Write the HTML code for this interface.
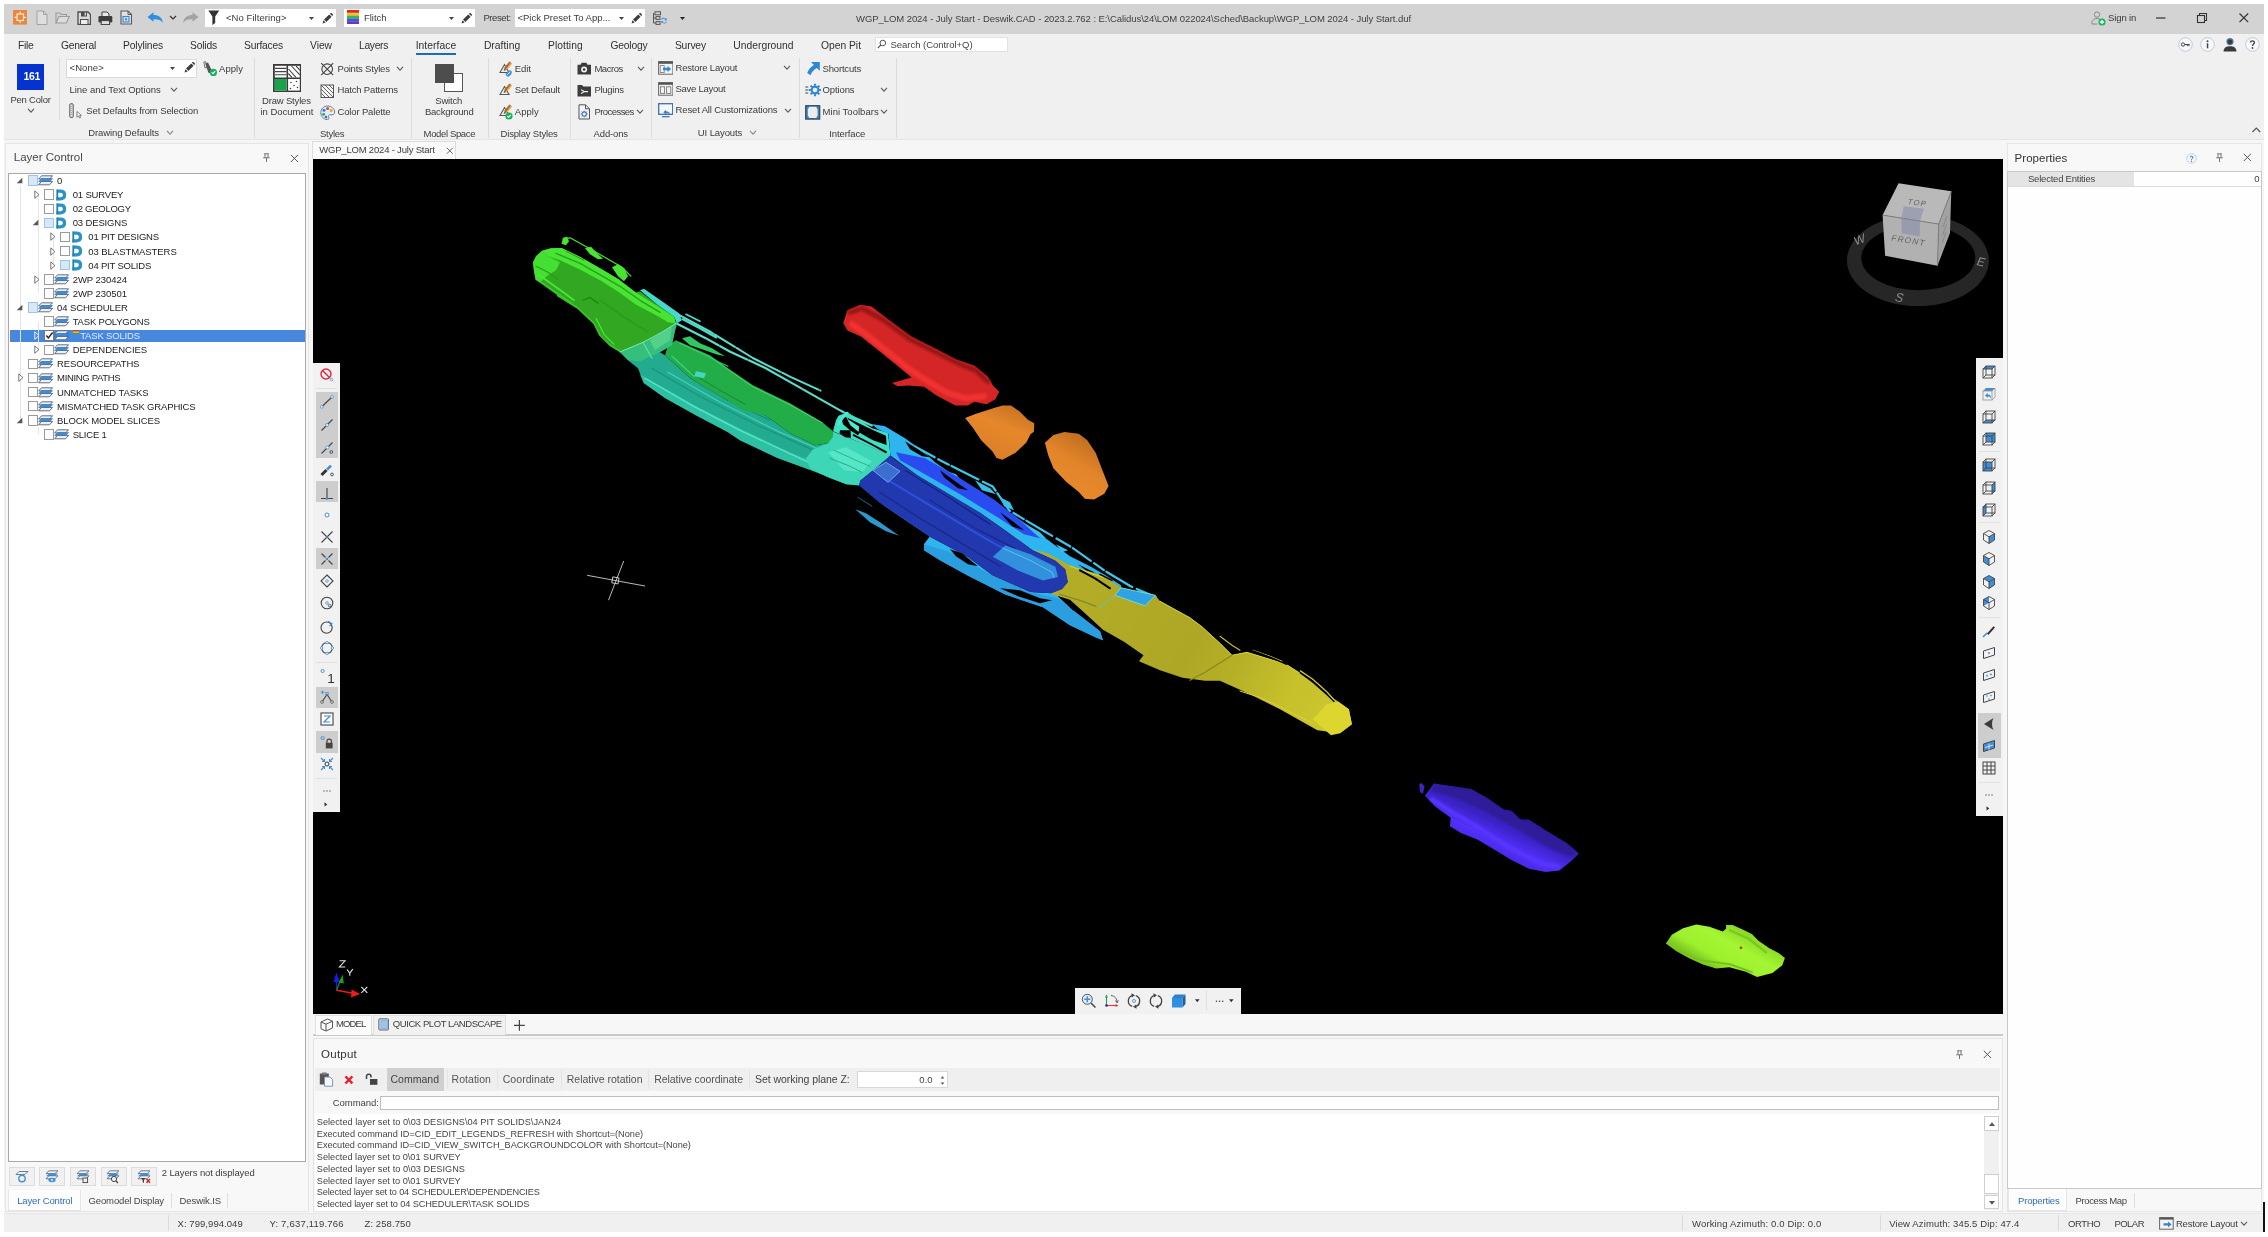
<!DOCTYPE html>
<html><head><meta charset="utf-8"><title>Deswik.CAD</title>
<style>
html,body{margin:0;padding:0;}
body{width:2268px;height:1237px;background:#fff;position:relative;overflow:hidden;font-family:"Liberation Sans",sans-serif;}
div,svg,span{position:absolute;}
.t{white-space:pre;}
#w{left:0;top:0;width:2268px;height:1237px;will-change:transform;}
</style></head><body><div id="w">
<div style="left:4px;top:4px;width:2260px;height:1228px;background:#f0f0f0;"></div>
<div style="left:4px;top:4px;width:2260px;height:30px;background:#d3d3d3;"></div>
<div style="left:4px;top:34px;width:2260px;height:105px;background:#f0f0f0;"></div>
<div style="left:4px;top:139px;width:2260px;height:1075px;background:#f6f6f6;"></div>
<div style="left:4px;top:139px;width:2260px;height:1px;background:#e4e4e4;"></div>
<div style="left:4px;top:1213px;width:2260px;height:19px;background:#f0f0f0;"></div>
<div style="left:4px;top:1213px;width:2260px;height:1px;background:#e6e6e6;"></div>
<div style="left:2263px;top:1202px;width:2px;height:30px;background:#111;"></div>
<div style="left:205px;top:9px;width:131px;height:18px;background:#fff;"></div>
<span class="t" style="left:226px;top:10.95px;font-size:9.5px;line-height:13.5px;color:#3b3b3b;letter-spacing:0.060px;">&lt;No Filtering&gt;</span>
<svg style="left:308.5px;top:17.0px;" width="5" height="3" viewBox="0 0 5 3"><path d="M0 0 H5 L2.5 3 Z" fill="#444"/></svg>
<svg style="left:321.5px;top:12.5px;" width="11" height="11" viewBox="0 0 11 11"><g fill="#3d3d3d"><path d="M0.6 10.4 L1.4 7.3 L3.7 9.6 Z"/><path d="M2 6.6 L7.2 1.4 L9.6 3.8 L4.4 9 Z"/><path d="M7.9 0.8 L8.6 0.1 Q9.2 -0.3 9.8 0.3 L10.7 1.2 Q11.2 1.8 10.8 2.4 L10.2 3.1 Z"/></g></svg>
<div style="left:343.5px;top:9px;width:131.5px;height:18px;background:#fff;"></div>
<span class="t" style="left:364px;top:10.95px;font-size:9.5px;line-height:13.5px;color:#3b3b3b;letter-spacing:-0.033px;">Flitch</span>
<svg style="left:448.5px;top:17.0px;" width="5" height="3" viewBox="0 0 5 3"><path d="M0 0 H5 L2.5 3 Z" fill="#444"/></svg>
<svg style="left:460.5px;top:12.5px;" width="11" height="11" viewBox="0 0 11 11"><g fill="#3d3d3d"><path d="M0.6 10.4 L1.4 7.3 L3.7 9.6 Z"/><path d="M2 6.6 L7.2 1.4 L9.6 3.8 L4.4 9 Z"/><path d="M7.9 0.8 L8.6 0.1 Q9.2 -0.3 9.8 0.3 L10.7 1.2 Q11.2 1.8 10.8 2.4 L10.2 3.1 Z"/></g></svg>
<span class="t" style="left:483.4px;top:10.95px;font-size:9.5px;line-height:13.5px;color:#3b3b3b;letter-spacing:-0.399px;">Preset:</span>
<div style="left:515px;top:9px;width:130px;height:18px;background:#fff;"></div>
<span class="t" style="left:517.4px;top:10.95px;font-size:9.5px;line-height:13.5px;color:#3b3b3b;letter-spacing:-0.001px;">&lt;Pick Preset To App...</span>
<svg style="left:618.5px;top:17.0px;" width="5" height="3" viewBox="0 0 5 3"><path d="M0 0 H5 L2.5 3 Z" fill="#444"/></svg>
<svg style="left:630.5px;top:12.5px;" width="11" height="11" viewBox="0 0 11 11"><g fill="#3d3d3d"><path d="M0.6 10.4 L1.4 7.3 L3.7 9.6 Z"/><path d="M2 6.6 L7.2 1.4 L9.6 3.8 L4.4 9 Z"/><path d="M7.9 0.8 L8.6 0.1 Q9.2 -0.3 9.8 0.3 L10.7 1.2 Q11.2 1.8 10.8 2.4 L10.2 3.1 Z"/></g></svg>
<svg style="left:680.0px;top:17.0px;" width="5" height="3" viewBox="0 0 5 3"><path d="M0 0 H5 L2.5 3 Z" fill="#222"/></svg>
<span class="t" style="left:856px;top:11.65px;font-size:9.5px;line-height:13.5px;color:#3f3f3f;letter-spacing:-0.065px;">WGP_LOM 2024 - July Start - Deswik.CAD - 2023.2.762 : E:\Calidus\24\LOM 022024\Sched\Backup\WGP_LOM 2024 - July Start.duf</span>
<span class="t" style="left:2108px;top:10.95px;font-size:9.5px;line-height:13.5px;color:#3b3b3b;letter-spacing:-0.107px;">Sign in</span>
<svg style="left:2155px;top:12px;" width="12" height="12" viewBox="0 0 12 12"><path d="M1 6 H10.5" stroke="#333" stroke-width="1.2"/></svg>
<svg style="left:2196px;top:12px;" width="12" height="12" viewBox="0 0 12 12"><path d="M3.5 3.5 V1.5 H10.5 V8.5 H8.5" fill="none" stroke="#333" stroke-width="1.1"/><rect x="1.5" y="3.5" width="7" height="7" fill="none" stroke="#333" stroke-width="1.1"/></svg>
<svg style="left:2238px;top:12px;" width="12" height="12" viewBox="0 0 12 12"><path d="M1.5 1.5 L10.2 10.2 M10.2 1.5 L1.5 10.2" stroke="#333" stroke-width="1.2"/></svg>
<span class="t" style="left:18px;top:38.65px;font-size:10.3px;line-height:14.3px;color:#303030;letter-spacing:-0.274px;">File</span>
<span class="t" style="left:61px;top:38.65px;font-size:10.3px;line-height:14.3px;color:#303030;letter-spacing:-0.234px;">General</span>
<span class="t" style="left:123px;top:38.65px;font-size:10.3px;line-height:14.3px;color:#303030;letter-spacing:-0.135px;">Polylines</span>
<span class="t" style="left:190px;top:38.65px;font-size:10.3px;line-height:14.3px;color:#303030;letter-spacing:-0.176px;">Solids</span>
<span class="t" style="left:244px;top:38.65px;font-size:10.3px;line-height:14.3px;color:#303030;letter-spacing:-0.206px;">Surfaces</span>
<span class="t" style="left:310px;top:38.65px;font-size:10.3px;line-height:14.3px;color:#303030;letter-spacing:-0.035px;">View</span>
<span class="t" style="left:359px;top:38.65px;font-size:10.3px;line-height:14.3px;color:#303030;letter-spacing:-0.319px;">Layers</span>
<span class="t" style="left:415.7px;top:38.65px;font-size:10.3px;line-height:14.3px;color:#303030;letter-spacing:0.047px;">Interface</span>
<span class="t" style="left:483.9px;top:38.65px;font-size:10.3px;line-height:14.3px;color:#303030;letter-spacing:0.030px;">Drafting</span>
<span class="t" style="left:548px;top:38.65px;font-size:10.3px;line-height:14.3px;color:#303030;letter-spacing:0.043px;">Plotting</span>
<span class="t" style="left:610.4px;top:38.65px;font-size:10.3px;line-height:14.3px;color:#303030;letter-spacing:-0.166px;">Geology</span>
<span class="t" style="left:674.9px;top:38.65px;font-size:10.3px;line-height:14.3px;color:#303030;letter-spacing:-0.176px;">Survey</span>
<span class="t" style="left:733.3px;top:38.65px;font-size:10.3px;line-height:14.3px;color:#303030;letter-spacing:0.016px;">Underground</span>
<span class="t" style="left:821px;top:38.65px;font-size:10.3px;line-height:14.3px;color:#303030;letter-spacing:-0.010px;">Open Pit</span>
<div style="left:415.7px;top:53px;width:40.5px;height:2px;background:#1b6cb8;"></div>
<div style="left:874.5px;top:36.5px;width:133px;height:15px;background:#fff;border:1px solid #e2e2e2;box-sizing:border-box;"></div>
<svg style="left:877px;top:39px;" width="10" height="10" viewBox="0 0 10 10"><circle cx="5.8" cy="4" r="2.8" fill="none" stroke="#555" stroke-width="1"/><path d="M3.8 6 L0.8 9.2" stroke="#555" stroke-width="1.1"/></svg>
<span class="t" style="left:890.5px;top:38.05px;font-size:9.5px;line-height:13.5px;color:#444;letter-spacing:-0.029px;">Search (Control+Q)</span>
<div style="left:58.6px;top:58px;width:1px;height:62px;background:#dcdcdc;"></div>
<div style="left:253.8px;top:58px;width:1px;height:80px;background:#dcdcdc;"></div>
<div style="left:411px;top:58px;width:1px;height:80px;background:#dcdcdc;"></div>
<div style="left:487.5px;top:58px;width:1px;height:80px;background:#dcdcdc;"></div>
<div style="left:570px;top:58px;width:1px;height:80px;background:#dcdcdc;"></div>
<div style="left:651.4px;top:58px;width:1px;height:80px;background:#dcdcdc;"></div>
<div style="left:799px;top:58px;width:1px;height:80px;background:#dcdcdc;"></div>
<div style="left:896.3px;top:58px;width:1px;height:80px;background:#dcdcdc;"></div>
<div style="left:16.8px;top:63.7px;width:27.2px;height:26.8px;background:#0433cf;"></div>
<span class="t" style="left:23.4px;top:68.85px;font-size:10.5px;line-height:14.5px;color:#fff;letter-spacing:-0.239px;font-weight:bold;">161</span>
<span class="t" style="left:10.4px;top:92.85px;font-size:9.5px;line-height:13.5px;color:#3b3b3b;letter-spacing:-0.205px;">Pen Color</span>
<svg style="left:26.5px;top:107.7px;" width="8" height="5.2" viewBox="0 0 8 5.2"><path d="M1 1 L4.0 4.2 L7 1" fill="none" stroke="#5a5a5a" stroke-width="1.1"/></svg>
<div style="left:65.8px;top:58.6px;width:131.6px;height:19.3px;background:#fff;border:1px solid #dadada;box-sizing:border-box;"></div>
<span class="t" style="left:69.5px;top:60.55px;font-size:9.5px;line-height:13.5px;color:#3b3b3b;letter-spacing:0.099px;">&lt;None&gt;</span>
<svg style="left:170.3px;top:66.8px;" width="5" height="3" viewBox="0 0 5 3"><path d="M0 0 H5 L2.5 3 Z" fill="#444"/></svg>
<svg style="left:183.5px;top:62.3px;" width="11" height="11" viewBox="0 0 11 11"><g fill="#3d3d3d"><path d="M0.6 10.4 L1.4 7.3 L3.7 9.6 Z"/><path d="M2 6.6 L7.2 1.4 L9.6 3.8 L4.4 9 Z"/><path d="M7.9 0.8 L8.6 0.1 Q9.2 -0.3 9.8 0.3 L10.7 1.2 Q11.2 1.8 10.8 2.4 L10.2 3.1 Z"/></g></svg>
<span class="t" style="left:219px;top:61.85px;font-size:9.5px;line-height:13.5px;color:#3b3b3b;letter-spacing:0.047px;">Apply</span>
<span class="t" style="left:69.5px;top:82.95px;font-size:9.5px;line-height:13.5px;color:#3b3b3b;letter-spacing:-0.020px;">Line and Text Options</span>
<svg style="left:170.2px;top:86.60000000000001px;" width="8" height="5.2" viewBox="0 0 8 5.2"><path d="M1 1 L4.0 4.2 L7 1" fill="none" stroke="#5a5a5a" stroke-width="1.1"/></svg>
<span class="t" style="left:86.3px;top:103.95px;font-size:9.5px;line-height:13.5px;color:#3b3b3b;letter-spacing:-0.119px;">Set Defaults from Selection</span>
<span class="t" style="left:88.3px;top:125.65px;font-size:9.5px;line-height:13.5px;color:#3b3b3b;letter-spacing:-0.115px;">Drawing Defaults</span>
<svg style="left:165.6px;top:129.70000000000002px;" width="8" height="5.2" viewBox="0 0 8 5.2"><path d="M1 1 L4.0 4.2 L7 1" fill="none" stroke="#888" stroke-width="1.1"/></svg>
<span class="t" style="left:262px;top:93.65px;font-size:9.5px;line-height:13.5px;color:#3b3b3b;letter-spacing:-0.171px;">Draw Styles</span>
<span class="t" style="left:260.5px;top:104.55px;font-size:9.5px;line-height:13.5px;color:#3b3b3b;letter-spacing:-0.048px;">in Document</span>
<span class="t" style="left:337.5px;top:61.55px;font-size:9.5px;line-height:13.5px;color:#3b3b3b;letter-spacing:-0.209px;">Points Styles</span>
<svg style="left:396.4px;top:65.80000000000001px;" width="8" height="5.2" viewBox="0 0 8 5.2"><path d="M1 1 L4.0 4.2 L7 1" fill="none" stroke="#5a5a5a" stroke-width="1.1"/></svg>
<span class="t" style="left:337.5px;top:83.25px;font-size:9.5px;line-height:13.5px;color:#3b3b3b;letter-spacing:-0.181px;">Hatch Patterns</span>
<span class="t" style="left:337.5px;top:104.95px;font-size:9.5px;line-height:13.5px;color:#3b3b3b;letter-spacing:-0.155px;">Color Palette</span>
<span class="t" style="left:320px;top:126.65px;font-size:9.5px;line-height:13.5px;color:#3b3b3b;letter-spacing:-0.278px;">Styles</span>
<span class="t" style="left:435.3px;top:93.65px;font-size:9.5px;line-height:13.5px;color:#3b3b3b;letter-spacing:-0.197px;">Switch</span>
<span class="t" style="left:424.9px;top:104.55px;font-size:9.5px;line-height:13.5px;color:#3b3b3b;letter-spacing:-0.210px;">Background</span>
<span class="t" style="left:423.6px;top:126.65px;font-size:9.5px;line-height:13.5px;color:#3b3b3b;letter-spacing:-0.359px;">Model Space</span>
<span class="t" style="left:514.8px;top:61.55px;font-size:9.5px;line-height:13.5px;color:#3b3b3b;letter-spacing:-0.092px;">Edit</span>
<span class="t" style="left:514.8px;top:83.25px;font-size:9.5px;line-height:13.5px;color:#3b3b3b;letter-spacing:-0.163px;">Set Default</span>
<span class="t" style="left:514.8px;top:104.95px;font-size:9.5px;line-height:13.5px;color:#3b3b3b;letter-spacing:0.047px;">Apply</span>
<span class="t" style="left:500.6px;top:126.65px;font-size:9.5px;line-height:13.5px;color:#3b3b3b;letter-spacing:-0.190px;">Display Styles</span>
<span class="t" style="left:594.4px;top:61.55px;font-size:9.5px;line-height:13.5px;color:#3b3b3b;letter-spacing:-0.440px;">Macros</span>
<svg style="left:636.9px;top:65.80000000000001px;" width="8" height="5.2" viewBox="0 0 8 5.2"><path d="M1 1 L4.0 4.2 L7 1" fill="none" stroke="#5a5a5a" stroke-width="1.1"/></svg>
<span class="t" style="left:594.4px;top:83.25px;font-size:9.5px;line-height:13.5px;color:#3b3b3b;letter-spacing:-0.265px;">Plugins</span>
<span class="t" style="left:594.4px;top:104.95px;font-size:9.5px;line-height:13.5px;color:#3b3b3b;letter-spacing:-0.550px;">Processes</span>
<svg style="left:636.0px;top:109.2px;" width="8" height="5.2" viewBox="0 0 8 5.2"><path d="M1 1 L4.0 4.2 L7 1" fill="none" stroke="#5a5a5a" stroke-width="1.1"/></svg>
<span class="t" style="left:593.6px;top:126.65px;font-size:9.5px;line-height:13.5px;color:#3b3b3b;letter-spacing:-0.155px;">Add-ons</span>
<span class="t" style="left:675.5px;top:61.05px;font-size:9.5px;line-height:13.5px;color:#3b3b3b;letter-spacing:-0.194px;">Restore Layout</span>
<svg style="left:783.0px;top:65.2px;" width="8" height="5.2" viewBox="0 0 8 5.2"><path d="M1 1 L4.0 4.2 L7 1" fill="none" stroke="#5a5a5a" stroke-width="1.1"/></svg>
<span class="t" style="left:675.5px;top:82.25px;font-size:9.5px;line-height:13.5px;color:#3b3b3b;letter-spacing:-0.265px;">Save Layout</span>
<span class="t" style="left:675.5px;top:103.35px;font-size:9.5px;line-height:13.5px;color:#3b3b3b;letter-spacing:-0.132px;">Reset All Customizations</span>
<svg style="left:784.3px;top:107.60000000000001px;" width="8" height="5.2" viewBox="0 0 8 5.2"><path d="M1 1 L4.0 4.2 L7 1" fill="none" stroke="#5a5a5a" stroke-width="1.1"/></svg>
<span class="t" style="left:697.8px;top:125.65px;font-size:9.5px;line-height:13.5px;color:#3b3b3b;letter-spacing:-0.101px;">UI Layouts</span>
<svg style="left:748.6px;top:129.70000000000002px;" width="8" height="5.2" viewBox="0 0 8 5.2"><path d="M1 1 L4.0 4.2 L7 1" fill="none" stroke="#888" stroke-width="1.1"/></svg>
<span class="t" style="left:822.6px;top:61.55px;font-size:9.5px;line-height:13.5px;color:#3b3b3b;letter-spacing:-0.192px;">Shortcuts</span>
<span class="t" style="left:822.6px;top:83.25px;font-size:9.5px;line-height:13.5px;color:#3b3b3b;letter-spacing:-0.134px;">Options</span>
<svg style="left:880.3px;top:87.4px;" width="8" height="5.2" viewBox="0 0 8 5.2"><path d="M1 1 L4.0 4.2 L7 1" fill="none" stroke="#5a5a5a" stroke-width="1.1"/></svg>
<span class="t" style="left:822.6px;top:104.95px;font-size:9.5px;line-height:13.5px;color:#3b3b3b;letter-spacing:0.024px;">Mini Toolbars</span>
<svg style="left:880.3px;top:109.2px;" width="8" height="5.2" viewBox="0 0 8 5.2"><path d="M1 1 L4.0 4.2 L7 1" fill="none" stroke="#5a5a5a" stroke-width="1.1"/></svg>
<span class="t" style="left:829.3px;top:126.65px;font-size:9.5px;line-height:13.5px;color:#3b3b3b;letter-spacing:-0.107px;">Interface</span>
<svg style="left:2251px;top:126px;" width="11" height="8" viewBox="0 0 11 8"><path d="M1.5 6 L5.3 2 L9.2 6" fill="none" stroke="#555" stroke-width="1.2"/></svg>
<svg style="left:12.5px;top:10.4px;" width="14.5" height="14.6" viewBox="0 0 14.5 14.6"><rect width="14.5" height="14.6" fill="#e9873c"/><rect x="4" y="4" width="6.5" height="6.5" fill="none" stroke="#fde7d2" stroke-width="1.2"/><path d="M7.25 1.5 V4 M7.25 10.5 V13 M1.5 7.3 H4 M10.5 7.3 H13" stroke="#fde7d2" stroke-width="1.2"/></svg>
<svg style="left:35.5px;top:10px;" width="12" height="15.5" viewBox="0 0 12 15.5"><path d="M1 1 H7.5 L11 4.5 V14.5 H1 Z" fill="#dedede" stroke="#a2a2a2" stroke-width="1"/><path d="M7.5 1 V4.5 H11" fill="none" stroke="#a2a2a2" stroke-width="1"/></svg>
<svg style="left:54.5px;top:11px;" width="15" height="13" viewBox="0 0 15 13"><path d="M1 12 V2 H5 L6.5 3.5 H11.5 V5.5" fill="none" stroke="#9a9a9a" stroke-width="1.1"/><path d="M1 12 L4 5.5 H14.3 L11.3 12 Z" fill="#dcdcdc" stroke="#9a9a9a" stroke-width="1.1"/></svg>
<svg style="left:76.8px;top:10.5px;" width="14.5" height="14.5" viewBox="0 0 14.5 14.5"><path d="M1 1 H11 L13.5 3.5 V13.5 H1 Z" fill="#d9d9d9" stroke="#4d4d4d" stroke-width="1.3"/><rect x="4" y="1" width="6" height="4.5" fill="#4d4d4d"/><rect x="7.6" y="1.6" width="1.4" height="3" fill="#d9d9d9"/><rect x="3.5" y="8.5" width="7.5" height="5" fill="#eee" stroke="#4d4d4d" stroke-width="1"/></svg>
<svg style="left:97.8px;top:10.5px;" width="14.8" height="14.5" viewBox="0 0 14.8 14.5"><path d="M4 5 V1 H9 L11 3 V5" fill="#e8e8e8" stroke="#3c3c3c" stroke-width="1"/><rect x="0.5" y="5" width="13.8" height="6.5" rx="1.2" fill="#3c3c3c"/><rect x="3.2" y="9.6" width="8.4" height="4" fill="#ddd" stroke="#3c3c3c" stroke-width="1"/></svg>
<svg style="left:120.2px;top:10.3px;" width="12.5" height="15" viewBox="0 0 12.5 15"><path d="M1 1 H8 L11.5 4.5 V14 H1 Z" fill="#e2e2e2" stroke="#5a5a5a" stroke-width="1.1"/><path d="M8 1 V4.5 H11.5" fill="none" stroke="#5a5a5a" stroke-width="1"/><rect x="3" y="6.5" width="6" height="5.5" fill="#c6def3" stroke="#3f88cf" stroke-width="1.1"/><rect x="5" y="8.3" width="2" height="2" fill="#3f88cf"/></svg>
<svg style="left:146.5px;top:11.5px;" width="17" height="12" viewBox="0 0 17 12"><path d="M0.5 5 L6.5 0.3 V3 C11.5 3 15.5 5.5 15.8 11 C14 7.8 11 7 6.5 7.2 V9.8 Z" fill="#2f8ee0"/></svg>
<svg style="left:168.5px;top:15.3px;" width="8" height="5" viewBox="0 0 8 5"><path d="M1 1 L4 4 L7 1" fill="none" stroke="#333" stroke-width="1.2"/></svg>
<svg style="left:181.5px;top:11.5px;" width="17" height="12" viewBox="0 0 17 12"><path d="M16.5 5 L10.5 0.3 V3 C5.5 3 1.5 5.5 1.2 11 C3 7.8 6 7 10.5 7.2 V9.8 Z" fill="#a3a3a3"/></svg>
<svg style="left:207.5px;top:10px;" width="12" height="15.5" viewBox="0 0 12 15.5"><path d="M0.3 0.5 H11.3 L7.2 6.5 V13 L4.4 15 V6.5 Z" fill="#333"/></svg>
<svg style="left:346.6px;top:10.4px;" width="12" height="14" viewBox="0 0 12 14"><rect x="0" y="0.0" width="12" height="2.9" fill="#e8212b"/><rect x="0" y="2.8" width="12" height="2.9" fill="#f6c21c"/><rect x="0" y="5.6" width="12" height="2.9" fill="#3bb54a"/><rect x="0" y="8.4" width="12" height="2.9" fill="#2a63d8"/><rect x="0" y="11.2" width="12" height="2.9" fill="#7a2fc0"/></svg>
<svg style="left:652px;top:10.5px;" width="16" height="15" viewBox="0 0 16 15"><g fill="none" stroke="#555" stroke-width="1"><rect x="3" y="0.8" width="5.5" height="3"/><path d="M1.5 2 V12 H4 M1.5 7 H4"/><rect x="4" y="5.6" width="4" height="2.8"/><rect x="4" y="10.6" width="4" height="2.8"/></g><path d="M9 8.3 A3 3 0 0 1 14 8 L14.5 6.8 L15 9.6 L12.3 9.3 L13.3 8.6 A2 2 0 0 0 9.9 8.7Z M15 11 A3 3 0 0 1 10 11.5 L9.5 12.6 L9 9.9 L11.7 10.2 L10.7 10.9 A2 2 0 0 0 14.1 10.7Z" fill="#3f8ed8"/></svg>
<svg style="left:2090.5px;top:10.5px;" width="15" height="15" viewBox="0 0 15 15"><circle cx="6" cy="3.6" r="2.7" fill="none" stroke="#8a8a8a" stroke-width="1"/><path d="M0.8 13 C0.8 9 3 7.6 6 7.6 C7.5 7.6 8.6 8 9.4 8.6" fill="none" stroke="#8a8a8a" stroke-width="1"/><path d="M0.8 13 H6.5" stroke="#8a8a8a" stroke-width="1"/><circle cx="11" cy="11" r="3.6" fill="#14b562"/><path d="M11 8.9 V13.1 M8.9 11 H13.1" stroke="#fff" stroke-width="1.3"/></svg>
<svg style="left:2177.5px;top:37.2px;" width="15" height="15" viewBox="0 0 15 15"><circle cx="7.5" cy="7.5" r="6.8" fill="#f7f9fc" stroke="#b8c7da" stroke-width="0.9"/><circle cx="5" cy="7.5" r="1.7" fill="none" stroke="#444" stroke-width="1"/><path d="M6.7 7.5 H11.5 M9.3 7.5 V9.2 M11 7.5 V9.2" stroke="#444" stroke-width="1"/></svg>
<svg style="left:2199.7px;top:37.2px;" width="15" height="15" viewBox="0 0 15 15"><circle cx="7.5" cy="7.5" r="6.8" fill="#f7f9fc" stroke="#b8c7da" stroke-width="0.9"/><rect x="6.8" y="6.3" width="1.5" height="5" fill="#444"/><circle cx="7.5" cy="4.2" r="1" fill="#444"/></svg>
<svg style="left:2223px;top:37px;" width="14" height="15" viewBox="0 0 14 15"><circle cx="7" cy="4.6" r="3.6" fill="#5b7791"/><circle cx="7" cy="4.8" r="2.4" fill="#2f3e4d"/><path d="M0.5 14.5 C0.8 10.5 3.5 9.3 7 9.3 C10.5 9.3 13.2 10.5 13.5 14.5 Z" fill="#3a3a3a"/></svg>
<svg style="left:2244.7px;top:37.2px;" width="15" height="15" viewBox="0 0 15 15"><circle cx="7.5" cy="7.5" r="6.8" fill="#f7f9fc" stroke="#b8c7da" stroke-width="0.9"/><path d="M5.6 5.6 C5.6 3.3 9.4 3.3 9.4 5.6 C9.4 7.2 7.5 7 7.5 9" fill="none" stroke="#444" stroke-width="1.4"/><circle cx="7.5" cy="11" r="0.9" fill="#444"/></svg>
<svg style="left:201.5px;top:60.5px;" width="15.5" height="15.5" viewBox="0 0 15.5 15.5"><path d="M1.8 1 L3.5 0.6 L5.5 6 L3 7 Z" fill="none" stroke="#666" stroke-width="0.9"/><path d="M3.2 2.6 L6 1.6 L10.3 10.6 L8.6 12.2 L6.4 11.8 Z" fill="#555"/><circle cx="11.4" cy="11.4" r="3.6" fill="#17b062"/><path d="M9.7 11.4 L11 12.7 L13.2 10.2" fill="none" stroke="#fff" stroke-width="1.1"/></svg>
<svg style="left:69.3px;top:103px;" width="14" height="16" viewBox="0 0 14 16"><rect x="0.8" y="0.8" width="3.4" height="13.6" rx="0.8" fill="#e6e6e6" stroke="#555" stroke-width="1"/><path d="M2.5 3 V12" stroke="#999" stroke-width="0.8" stroke-dasharray="1 1"/><path d="M8 8.5 V14.3 L9.5 12.8 L10.6 15 L11.6 14.5 L10.6 12.4 H12.4 Z" fill="#fff" stroke="#666" stroke-width="0.8"/></svg>
<svg style="left:272.6px;top:63.8px;" width="28.6" height="28.4" viewBox="0 0 28.6 28.4"><rect x="0.9" y="0.9" width="26.8" height="26.6" fill="#fff" stroke="#3a3a3a" stroke-width="1.8"/>
<path d="M14.3 0.9 V27.5 M0.9 14.2 H27.7" stroke="#3a3a3a" stroke-width="1.6"/>
<path d="M2 4.4 H13.4 M2 7.6 H13.4 M2 10.8 H13.4" stroke="#444" stroke-width="1.1"/>
<path d="M15.5 5 L23 13.3 M18.5 2 L26.8 11 M15.3 9.5 L19 13.4 M23 2 L27 6.3" stroke="#444" stroke-width="1.1"/>
<rect x="1.8" y="15" width="11.7" height="11.6" fill="#16a34a"/>
<g fill="#444"><circle cx="18" cy="18.5" r="0.8"/><circle cx="23.5" cy="17.5" r="0.8"/><circle cx="21" cy="21.5" r="0.8"/><circle cx="17.5" cy="24.5" r="0.8"/><circle cx="24.5" cy="23.5" r="0.8"/></g></svg>
<svg style="left:320.3px;top:61.5px;" width="14.5" height="14.5" viewBox="0 0 14.5 14.5"><circle cx="7.2" cy="7.2" r="5.3" fill="none" stroke="#444" stroke-width="1.1"/><path d="M1.2 1.2 L13.2 13.2 M13.2 1.2 L1.2 13.2" stroke="#444" stroke-width="1.1"/></svg>
<svg style="left:320.3px;top:83.5px;" width="14.5" height="14.5" viewBox="0 0 14.5 14.5"><rect x="1" y="1" width="12.5" height="12.5" fill="#f4f4f4" stroke="#555" stroke-width="1"/><path d="M1 5 L9.5 13.5 M1 9 L5.5 13.5 M1 1 L13.5 13.5 M5 1 L13.5 9.5 M9 1 L13.5 5.5" stroke="#555" stroke-width="0.9"/></svg>
<svg style="left:320px;top:104.5px;" width="15.5" height="15.5" viewBox="0 0 15.5 15.5"><path d="M7.5 1 C3.5 1 0.8 4 0.8 7.7 C0.8 11.5 3.8 14.5 7.3 14.5 C9 14.5 9.3 13.3 8.7 12.3 C8 11 8.8 9.8 10.2 9.8 H12 C13.6 9.8 14.7 8.8 14.7 7.2 C14.7 3.6 11.5 1 7.5 1 Z" fill="#e7edf5" stroke="#5f7ea8" stroke-width="1"/><circle cx="4" cy="5.3" r="1.5" fill="#3a7bd5"/><circle cx="7.6" cy="3.6" r="1.5" fill="#e8442e"/><circle cx="11.2" cy="5.5" r="1.5" fill="#f2a516"/><circle cx="3.6" cy="9.3" r="1.5" fill="#3aa856"/><circle cx="6" cy="12" r="1.3" fill="#2f6fc0"/></svg>
<div style="left:443.7px;top:72.9px;width:19.2px;height:18.9px;background:#fdfdfd;border:1.3px solid #555;box-sizing:border-box;"></div>
<div style="left:435px;top:64.2px;width:19px;height:18.7px;background:#4d4d4d;"></div>
<svg style="left:499.3px;top:60.8px;" width="14.5" height="16" viewBox="0 0 14.5 16"><path d="M1 11.5 L5.5 3.5 L10 11.5 Z" fill="none" stroke="#555" stroke-width="1.1"/><path d="M6 8 L11.5 1.2" stroke="#e63d2f" stroke-width="1.5"/><path d="M7 8.9 L12.6 2.1" stroke="#f2a21b" stroke-width="1.3"/><path d="M5.3 7.3 L10.6 0.6" stroke="#3aa856" stroke-width="1"/><path d="M4.6 10 L5.4 7.4 L7.3 9 Z" fill="#555"/><path d="M6.5 12.5 L9 10 L11.5 9.2 L13 10.7 L12.2 13.2 L9.7 15.7 L7.3 15 Z" fill="#3f8ed8"/><path d="M8.2 13.8 L11.3 10.8" stroke="#fff" stroke-width="0.9"/></svg>
<svg style="left:499.3px;top:82.8px;" width="14.5" height="16" viewBox="0 0 14.5 16"><path d="M1 11.5 L5.5 3.5 L10 11.5 Z" fill="none" stroke="#555" stroke-width="1.1"/><path d="M6 8 L11.5 1.2" stroke="#e63d2f" stroke-width="1.5"/><path d="M7 8.9 L12.6 2.1" stroke="#f2a21b" stroke-width="1.3"/><path d="M5.3 7.3 L10.6 0.6" stroke="#3aa856" stroke-width="1"/><path d="M4.6 10 L5.4 7.4 L7.3 9 Z" fill="#555"/></svg>
<svg style="left:499.3px;top:104.2px;" width="14.5" height="16" viewBox="0 0 14.5 16"><path d="M1 11.5 L5.5 3.5 L10 11.5 Z" fill="none" stroke="#555" stroke-width="1.1"/><path d="M6 8 L11.5 1.2" stroke="#e63d2f" stroke-width="1.5"/><path d="M7 8.9 L12.6 2.1" stroke="#f2a21b" stroke-width="1.3"/><path d="M5.3 7.3 L10.6 0.6" stroke="#3aa856" stroke-width="1"/><path d="M4.6 10 L5.4 7.4 L7.3 9 Z" fill="#555"/><circle cx="10" cy="12" r="3.6" fill="#17b062"/><path d="M8.3 12 L9.6 13.3 L11.8 10.8" fill="none" stroke="#fff" stroke-width="1.1"/></svg>
<svg style="left:577px;top:61.6px;" width="14.5" height="13" viewBox="0 0 14.5 13"><path d="M0.5 2.8 H3.5 L4.6 0.8 H9.4 L10.5 2.8 H14 V12.4 H0.5 Z" fill="#3c3c3c"/><circle cx="7.1" cy="7.5" r="3" fill="#f2f2f2"/><circle cx="7.1" cy="7.5" r="1.3" fill="#3c3c3c"/></svg>
<svg style="left:577px;top:83.6px;" width="14.5" height="13" viewBox="0 0 14.5 13"><path d="M0.5 1 H5 L6.3 2.6 H14 V12.5 H0.5 Z" fill="#3c3c3c"/><path d="M4 5.7 L7.5 7.6 L4 9.5 M7.5 7.6 H11" fill="none" stroke="#eee" stroke-width="1.1"/></svg>
<svg style="left:578px;top:104.2px;" width="12.5" height="16" viewBox="0 0 12.5 16"><path d="M1 0.8 H7.5 L11.5 4.8 V15 H1 Z" fill="#f5f5f5" stroke="#555" stroke-width="1"/><path d="M7.5 0.8 V4.8 H11.5" fill="none" stroke="#555" stroke-width="1"/><circle cx="6.2" cy="10" r="2.2" fill="none" stroke="#3f79c0" stroke-width="1.2"/><path d="M6.2 6.6 V7.6 M6.2 12.4 V13.4 M2.8 10 H3.8 M8.6 10 H9.6 M3.8 7.6 L4.5 8.3 M8.6 12.4 L7.9 11.7 M3.8 12.4 L4.5 11.7 M8.6 7.6 L7.9 8.3" stroke="#3f79c0" stroke-width="1"/></svg>
<svg style="left:657.6px;top:61px;" width="15.5" height="14" viewBox="0 0 15.5 14"><rect x="0.6" y="0.6" width="14.3" height="12.6" fill="#f3f3f3" stroke="#666" stroke-width="1"/><rect x="0.6" y="0.6" width="14.3" height="2.2" fill="#555"/><rect x="2.2" y="4.6" width="4" height="7" fill="none" stroke="#777" stroke-width="0.8"/><path d="M5 6.8 H9.5 V5 L13.2 8 L9.5 11 V9.2 H5 Z" fill="#2e86d6"/></svg>
<svg style="left:657.6px;top:82.3px;" width="15.5" height="14" viewBox="0 0 15.5 14"><rect x="0.6" y="0.6" width="14.3" height="12.6" fill="#f3f3f3" stroke="#666" stroke-width="1"/><rect x="0.6" y="0.6" width="14.3" height="2.2" fill="#555"/><rect x="2.4" y="4.8" width="4.2" height="6.6" fill="none" stroke="#777" stroke-width="0.9"/><rect x="8.6" y="4.8" width="4.2" height="6.6" fill="none" stroke="#777" stroke-width="0.9"/></svg>
<svg style="left:657.6px;top:103.4px;" width="15.5" height="15" viewBox="0 0 15.5 15"><rect x="0.7" y="0.7" width="14" height="10.6" fill="#f6f6f6" stroke="#3d6fa8" stroke-width="1.3"/><path d="M4 13.7 H11.5" stroke="#3d6fa8" stroke-width="1.2"/><path d="M5.3 9.3 L8 6.8 V8.3 C10.5 8.3 11.5 9 11.8 11.3 C10.6 10.2 9.8 10.2 8 10.2 V11.8 Z" fill="#2e86d6"/></svg>
<svg style="left:805.6px;top:61.3px;" width="15" height="15" viewBox="0 0 15 15"><path d="M5 1 H13.8 V9.8 L10.8 6.9 C7.5 8.8 5.5 11 4.6 14.3 L1.2 12 C2.6 8.3 4.8 5.8 8 4 Z" fill="#2e86d6"/></svg>
<svg style="left:805.4px;top:83.4px;" width="15.5" height="14" viewBox="0 0 15.5 14"><path d="M0.3 4 H3.2 M0.3 7 H3.2 M0.3 10 H3.2" stroke="#444" stroke-width="1.1"/><circle cx="10" cy="7" r="3.4" fill="none" stroke="#2e86d6" stroke-width="2.1"/><g stroke="#2e86d6" stroke-width="2"><path d="M10 0.8 V2.8 M10 11.2 V13.2 M3.8 7 H5.8 M14.2 7 H16 M5.6 2.6 L7 4 M13 10 L14.4 11.4 M5.6 11.4 L7 10 M13 4 L14.4 2.6"/></g></svg>
<svg style="left:805.4px;top:104.8px;" width="15.5" height="15" viewBox="0 0 15.5 15"><rect x="0.7" y="0.7" width="14" height="13.4" fill="#2e86d6" stroke="#444" stroke-width="1.2"/><path d="M4.2 1.8 H11.2 L12.6 4.6 V10.2 L11.2 13 H4.2 L2.8 10.2 V4.6 Z" fill="#ececec"/></svg>
<div style="left:5.3px;top:143px;width:303.7px;height:1069px;background:#f8f8f8;border:1px solid #e4e4e4;box-sizing:border-box;"></div>
<span class="t" style="left:13.8px;top:149.95px;font-size:11.5px;line-height:15.5px;color:#484848;letter-spacing:-0.010px;">Layer Control</span>
<svg style="left:262px;top:153px;" width="9" height="10" viewBox="0 0 9 10"><path d="M2.2 0.8 H6.8 M3 0.8 V4.6 M6 0.8 V4.6 M1.2 4.8 H7.8 M4.5 4.8 V9" fill="none" stroke="#666" stroke-width="0.9"/></svg>
<svg style="left:289.5px;top:153.5px;" width="9" height="9" viewBox="0 0 9 9"><path d="M0.8 0.8 L8 8 M8 0.8 L0.8 8" stroke="#555" stroke-width="1"/></svg>
<div style="left:8px;top:172.8px;width:298px;height:989px;background:#fff;border:1px solid #a8a8a8;box-sizing:border-box;"></div>
<div style="left:10px;top:329.59999999999997px;width:295px;height:12.2px;background:#4787de;"></div>
<div style="left:19.5px;top:185.6px;width:1px;height:234.69999999999996px;background:#e4e4e4;"></div>
<div style="left:37.5px;top:194.7px;width:1px;height:98.69999999999999px;background:#e4e4e4;"></div>
<div style="left:53px;top:237.0px;width:1px;height:28.19999999999999px;background:#e4e4e4;"></div>
<div style="left:37.5px;top:321.6px;width:1px;height:28.199999999999932px;background:#e4e4e4;"></div>
<div style="left:37.5px;top:427.4px;width:1px;height:7.0px;background:#e4e4e4;"></div>
<svg style="left:16px;top:177.1px;" width="7" height="7" viewBox="0 0 7 7"><path d="M6.3 0.7 V6.3 H0.7 Z" fill="#585858"/></svg>
<div style="left:28px;top:175.29999999999998px;width:10.4px;height:10.6px;background:#d7e9f9;border:1px solid #9fc3e6;box-sizing:border-box;"></div>
<svg style="left:38.0px;top:175.1px;" width="15.5" height="11" viewBox="0 0 15.5 11"><path d="M3.5 0.8 H14.6 L11.5 4 H0.6 Z" fill="#e8f1fa" stroke="#55606e" stroke-width="0.9"/><path d="M3.5 3.6 H14.6 L11.5 6.8 H0.6 Z" fill="#3f8fd9" stroke="#2f6fae" stroke-width="0.6"/><path d="M3.5 6.4 H14.6 L11.5 9.8 H0.6 Z" fill="#e8f1fa" stroke="#55606e" stroke-width="0.9"/></svg>
<span class="t" style="left:57.1px;top:174.05px;font-size:9.5px;line-height:13.5px;color:#1c1c1c;">0</span>
<svg style="left:33.6px;top:190.1px;" width="6" height="9.2" viewBox="0 0 6 9.2"><path d="M0.8 0.9 L5 4.6 L0.8 8.3 Z" fill="#fff" stroke="#666" stroke-width="0.9"/></svg>
<div style="left:44px;top:189.39999999999998px;width:10.4px;height:10.6px;background:#fff;border:1px solid #9a9a9a;box-sizing:border-box;"></div>
<svg style="left:56.0px;top:188.7px;" width="9.5" height="12" viewBox="0 0 9.5 12"><path d="M0.4 0.6 H4.6 C8.8 0.6 10.2 3 10.2 6 C10.2 9 8.8 11.4 4.6 11.4 H0.4 V8.2 H4.2 C6 8.2 6.8 7.4 6.8 6 C6.8 4.6 6 3.8 4.2 3.8 H2.2 Z" fill="#2a93c9"/><path d="M0.4 0.6 H2.2 V11.4 H0.4 Z" fill="#1f7fb3"/></svg>
<span class="t" style="left:72.69999999999999px;top:188.15px;font-size:9.5px;line-height:13.5px;color:#1c1c1c;letter-spacing:-0.167px;">01 SURVEY</span>
<div style="left:44px;top:203.49999999999997px;width:10.4px;height:10.6px;background:#fff;border:1px solid #9a9a9a;box-sizing:border-box;"></div>
<svg style="left:56.0px;top:202.79999999999998px;" width="9.5" height="12" viewBox="0 0 9.5 12"><path d="M0.4 0.6 H4.6 C8.8 0.6 10.2 3 10.2 6 C10.2 9 8.8 11.4 4.6 11.4 H0.4 V8.2 H4.2 C6 8.2 6.8 7.4 6.8 6 C6.8 4.6 6 3.8 4.2 3.8 H2.2 Z" fill="#2a93c9"/><path d="M0.4 0.6 H2.2 V11.4 H0.4 Z" fill="#1f7fb3"/></svg>
<span class="t" style="left:72.69999999999999px;top:202.25px;font-size:9.5px;line-height:13.5px;color:#1c1c1c;letter-spacing:-0.262px;">02 GEOLOGY</span>
<svg style="left:32px;top:219.39999999999998px;" width="7" height="7" viewBox="0 0 7 7"><path d="M6.3 0.7 V6.3 H0.7 Z" fill="#585858"/></svg>
<div style="left:44px;top:217.59999999999997px;width:10.4px;height:10.6px;background:#d7e9f9;border:1px solid #9fc3e6;box-sizing:border-box;"></div>
<svg style="left:56.0px;top:216.89999999999998px;" width="9.5" height="12" viewBox="0 0 9.5 12"><path d="M0.4 0.6 H4.6 C8.8 0.6 10.2 3 10.2 6 C10.2 9 8.8 11.4 4.6 11.4 H0.4 V8.2 H4.2 C6 8.2 6.8 7.4 6.8 6 C6.8 4.6 6 3.8 4.2 3.8 H2.2 Z" fill="#2a93c9"/><path d="M0.4 0.6 H2.2 V11.4 H0.4 Z" fill="#1f7fb3"/></svg>
<span class="t" style="left:72.69999999999999px;top:216.35px;font-size:9.5px;line-height:13.5px;color:#1c1c1c;letter-spacing:-0.137px;">03 DESIGNS</span>
<svg style="left:49.6px;top:232.4px;" width="6" height="9.2" viewBox="0 0 6 9.2"><path d="M0.8 0.9 L5 4.6 L0.8 8.3 Z" fill="#fff" stroke="#666" stroke-width="0.9"/></svg>
<div style="left:60px;top:231.7px;width:10.4px;height:10.6px;background:#fff;border:1px solid #9a9a9a;box-sizing:border-box;"></div>
<svg style="left:72.0px;top:231.0px;" width="9.5" height="12" viewBox="0 0 9.5 12"><path d="M0.4 0.6 H4.6 C8.8 0.6 10.2 3 10.2 6 C10.2 9 8.8 11.4 4.6 11.4 H0.4 V8.2 H4.2 C6 8.2 6.8 7.4 6.8 6 C6.8 4.6 6 3.8 4.2 3.8 H2.2 Z" fill="#2a93c9"/><path d="M0.4 0.6 H2.2 V11.4 H0.4 Z" fill="#1f7fb3"/></svg>
<span class="t" style="left:88.3px;top:230.45px;font-size:9.5px;line-height:13.5px;color:#1c1c1c;letter-spacing:-0.186px;">01 PIT DESIGNS</span>
<svg style="left:49.6px;top:246.5px;" width="6" height="9.2" viewBox="0 0 6 9.2"><path d="M0.8 0.9 L5 4.6 L0.8 8.3 Z" fill="#fff" stroke="#666" stroke-width="0.9"/></svg>
<div style="left:60px;top:245.79999999999998px;width:10.4px;height:10.6px;background:#fff;border:1px solid #9a9a9a;box-sizing:border-box;"></div>
<svg style="left:72.0px;top:245.1px;" width="9.5" height="12" viewBox="0 0 9.5 12"><path d="M0.4 0.6 H4.6 C8.8 0.6 10.2 3 10.2 6 C10.2 9 8.8 11.4 4.6 11.4 H0.4 V8.2 H4.2 C6 8.2 6.8 7.4 6.8 6 C6.8 4.6 6 3.8 4.2 3.8 H2.2 Z" fill="#2a93c9"/><path d="M0.4 0.6 H2.2 V11.4 H0.4 Z" fill="#1f7fb3"/></svg>
<span class="t" style="left:88.3px;top:244.55px;font-size:9.5px;line-height:13.5px;color:#1c1c1c;letter-spacing:-0.055px;">03 BLASTMASTERS</span>
<svg style="left:49.6px;top:260.59999999999997px;" width="6" height="9.2" viewBox="0 0 6 9.2"><path d="M0.8 0.9 L5 4.6 L0.8 8.3 Z" fill="#fff" stroke="#666" stroke-width="0.9"/></svg>
<div style="left:60px;top:259.9px;width:10.4px;height:10.6px;background:#d7e9f9;border:1px solid #9fc3e6;box-sizing:border-box;"></div>
<svg style="left:72.0px;top:259.2px;" width="9.5" height="12" viewBox="0 0 9.5 12"><path d="M0.4 0.6 H4.6 C8.8 0.6 10.2 3 10.2 6 C10.2 9 8.8 11.4 4.6 11.4 H0.4 V8.2 H4.2 C6 8.2 6.8 7.4 6.8 6 C6.8 4.6 6 3.8 4.2 3.8 H2.2 Z" fill="#2a93c9"/><path d="M0.4 0.6 H2.2 V11.4 H0.4 Z" fill="#1f7fb3"/></svg>
<span class="t" style="left:88.3px;top:258.65px;font-size:9.5px;line-height:13.5px;color:#1c1c1c;letter-spacing:-0.192px;">04 PIT SOLIDS</span>
<svg style="left:33.6px;top:274.7px;" width="6" height="9.2" viewBox="0 0 6 9.2"><path d="M0.8 0.9 L5 4.6 L0.8 8.3 Z" fill="#fff" stroke="#666" stroke-width="0.9"/></svg>
<div style="left:44px;top:274.0px;width:10.4px;height:10.6px;background:#fff;border:1px solid #9a9a9a;box-sizing:border-box;"></div>
<svg style="left:54.0px;top:273.8px;" width="15.5" height="11" viewBox="0 0 15.5 11"><path d="M3.5 0.8 H14.6 L11.5 4 H0.6 Z" fill="#e8f1fa" stroke="#55606e" stroke-width="0.9"/><path d="M3.5 3.6 H14.6 L11.5 6.8 H0.6 Z" fill="#3f8fd9" stroke="#2f6fae" stroke-width="0.6"/><path d="M3.5 6.4 H14.6 L11.5 9.8 H0.6 Z" fill="#e8f1fa" stroke="#55606e" stroke-width="0.9"/></svg>
<span class="t" style="left:72.69999999999999px;top:272.75px;font-size:9.5px;line-height:13.5px;color:#1c1c1c;letter-spacing:-0.045px;">2WP 230424</span>
<div style="left:44px;top:288.09999999999997px;width:10.4px;height:10.6px;background:#fff;border:1px solid #9a9a9a;box-sizing:border-box;"></div>
<svg style="left:54.0px;top:287.9px;" width="15.5" height="11" viewBox="0 0 15.5 11"><path d="M3.5 0.8 H14.6 L11.5 4 H0.6 Z" fill="#e8f1fa" stroke="#55606e" stroke-width="0.9"/><path d="M3.5 3.6 H14.6 L11.5 6.8 H0.6 Z" fill="#3f8fd9" stroke="#2f6fae" stroke-width="0.6"/><path d="M3.5 6.4 H14.6 L11.5 9.8 H0.6 Z" fill="#e8f1fa" stroke="#55606e" stroke-width="0.9"/></svg>
<span class="t" style="left:72.69999999999999px;top:286.85px;font-size:9.5px;line-height:13.5px;color:#1c1c1c;letter-spacing:-0.045px;">2WP 230501</span>
<svg style="left:16px;top:304.0px;" width="7" height="7" viewBox="0 0 7 7"><path d="M6.3 0.7 V6.3 H0.7 Z" fill="#585858"/></svg>
<div style="left:28px;top:302.2px;width:10.4px;height:10.6px;background:#d7e9f9;border:1px solid #9fc3e6;box-sizing:border-box;"></div>
<svg style="left:38.0px;top:302.0px;" width="15.5" height="11" viewBox="0 0 15.5 11"><path d="M3.5 0.8 H14.6 L11.5 4 H0.6 Z" fill="#e8f1fa" stroke="#55606e" stroke-width="0.9"/><path d="M3.5 3.6 H14.6 L11.5 6.8 H0.6 Z" fill="#3f8fd9" stroke="#2f6fae" stroke-width="0.6"/><path d="M3.5 6.4 H14.6 L11.5 9.8 H0.6 Z" fill="#e8f1fa" stroke="#55606e" stroke-width="0.9"/></svg>
<span class="t" style="left:57.1px;top:300.95px;font-size:9.5px;line-height:13.5px;color:#1c1c1c;letter-spacing:-0.092px;">04 SCHEDULER</span>
<div style="left:44px;top:316.3px;width:10.4px;height:10.6px;background:#fff;border:1px solid #9a9a9a;box-sizing:border-box;"></div>
<svg style="left:54.0px;top:316.1px;" width="15.5" height="11" viewBox="0 0 15.5 11"><path d="M3.5 0.8 H14.6 L11.5 4 H0.6 Z" fill="#e8f1fa" stroke="#55606e" stroke-width="0.9"/><path d="M3.5 3.6 H14.6 L11.5 6.8 H0.6 Z" fill="#3f8fd9" stroke="#2f6fae" stroke-width="0.6"/><path d="M3.5 6.4 H14.6 L11.5 9.8 H0.6 Z" fill="#e8f1fa" stroke="#55606e" stroke-width="0.9"/></svg>
<span class="t" style="left:72.69999999999999px;top:315.05px;font-size:9.5px;line-height:13.5px;color:#1c1c1c;letter-spacing:-0.190px;">TASK POLYGONS</span>
<svg style="left:33.6px;top:331.09999999999997px;" width="6" height="9.2" viewBox="0 0 6 9.2"><path d="M0.8 0.9 L5 4.6 L0.8 8.3 Z" fill="#4787de" stroke="#fff" stroke-width="0.9"/></svg>
<div style="left:44px;top:330.4px;width:10.4px;height:10.6px;background:#fff;border:1px solid #777;box-sizing:border-box;"></div>
<svg style="left:45px;top:331.2px;" width="9" height="9" viewBox="0 0 9 9"><path d="M1.3 4.5 L3.4 6.9 L7.6 1.5" fill="none" stroke="#222" stroke-width="1.4"/></svg>
<svg style="left:54.0px;top:330.2px;" width="15.5" height="11" viewBox="0 0 15.5 11"><path d="M3.5 0.8 H14.6 L11.5 4 H0.6 Z" fill="#e8f1fa" stroke="#55606e" stroke-width="0.9"/><path d="M3.5 3.6 H14.6 L11.5 6.8 H0.6 Z" fill="#3f8fd9" stroke="#2f6fae" stroke-width="0.6"/><path d="M3.5 6.4 H14.6 L11.5 9.8 H0.6 Z" fill="#e8f1fa" stroke="#55606e" stroke-width="0.9"/></svg>
<svg style="left:72.7px;top:329.9px;" width="6.5" height="4.5" viewBox="0 0 6.5 4.5"><rect width="6.5" height="1.5" fill="#e33"/><rect y="1.5" width="6.5" height="1.5" fill="#f2c21c"/><rect y="3" width="6.5" height="1.5" fill="#3a3"/></svg>
<span class="t" style="left:80.2px;top:329.15px;font-size:9.5px;line-height:13.5px;color:#dfe9f8;letter-spacing:-0.181px;">TASK SOLIDS</span>
<svg style="left:33.6px;top:345.19999999999993px;" width="6" height="9.2" viewBox="0 0 6 9.2"><path d="M0.8 0.9 L5 4.6 L0.8 8.3 Z" fill="#fff" stroke="#666" stroke-width="0.9"/></svg>
<div style="left:44px;top:344.49999999999994px;width:10.4px;height:10.6px;background:#fff;border:1px solid #9a9a9a;box-sizing:border-box;"></div>
<svg style="left:54.0px;top:344.29999999999995px;" width="15.5" height="11" viewBox="0 0 15.5 11"><path d="M3.5 0.8 H14.6 L11.5 4 H0.6 Z" fill="#e8f1fa" stroke="#55606e" stroke-width="0.9"/><path d="M3.5 3.6 H14.6 L11.5 6.8 H0.6 Z" fill="#3f8fd9" stroke="#2f6fae" stroke-width="0.6"/><path d="M3.5 6.4 H14.6 L11.5 9.8 H0.6 Z" fill="#e8f1fa" stroke="#55606e" stroke-width="0.9"/></svg>
<span class="t" style="left:72.69999999999999px;top:343.25px;font-size:9.5px;line-height:13.5px;color:#1c1c1c;letter-spacing:-0.047px;">DEPENDENCIES</span>
<div style="left:28px;top:358.59999999999997px;width:10.4px;height:10.6px;background:#fff;border:1px solid #9a9a9a;box-sizing:border-box;"></div>
<svg style="left:38.0px;top:358.4px;" width="15.5" height="11" viewBox="0 0 15.5 11"><path d="M3.5 0.8 H14.6 L11.5 4 H0.6 Z" fill="#e8f1fa" stroke="#55606e" stroke-width="0.9"/><path d="M3.5 3.6 H14.6 L11.5 6.8 H0.6 Z" fill="#3f8fd9" stroke="#2f6fae" stroke-width="0.6"/><path d="M3.5 6.4 H14.6 L11.5 9.8 H0.6 Z" fill="#e8f1fa" stroke="#55606e" stroke-width="0.9"/></svg>
<span class="t" style="left:57.1px;top:357.35px;font-size:9.5px;line-height:13.5px;color:#1c1c1c;letter-spacing:-0.147px;">RESOURCEPATHS</span>
<svg style="left:17.6px;top:373.4px;" width="6" height="9.2" viewBox="0 0 6 9.2"><path d="M0.8 0.9 L5 4.6 L0.8 8.3 Z" fill="#fff" stroke="#666" stroke-width="0.9"/></svg>
<div style="left:28px;top:372.7px;width:10.4px;height:10.6px;background:#fff;border:1px solid #9a9a9a;box-sizing:border-box;"></div>
<svg style="left:38.0px;top:372.5px;" width="15.5" height="11" viewBox="0 0 15.5 11"><path d="M3.5 0.8 H14.6 L11.5 4 H0.6 Z" fill="#e8f1fa" stroke="#55606e" stroke-width="0.9"/><path d="M3.5 3.6 H14.6 L11.5 6.8 H0.6 Z" fill="#3f8fd9" stroke="#2f6fae" stroke-width="0.6"/><path d="M3.5 6.4 H14.6 L11.5 9.8 H0.6 Z" fill="#e8f1fa" stroke="#55606e" stroke-width="0.9"/></svg>
<span class="t" style="left:57.1px;top:371.45px;font-size:9.5px;line-height:13.5px;color:#1c1c1c;letter-spacing:-0.334px;">MINING PATHS</span>
<div style="left:28px;top:386.8px;width:10.4px;height:10.6px;background:#fff;border:1px solid #9a9a9a;box-sizing:border-box;"></div>
<svg style="left:38.0px;top:386.6px;" width="15.5" height="11" viewBox="0 0 15.5 11"><path d="M3.5 0.8 H14.6 L11.5 4 H0.6 Z" fill="#e8f1fa" stroke="#55606e" stroke-width="0.9"/><path d="M3.5 3.6 H14.6 L11.5 6.8 H0.6 Z" fill="#3f8fd9" stroke="#2f6fae" stroke-width="0.6"/><path d="M3.5 6.4 H14.6 L11.5 9.8 H0.6 Z" fill="#e8f1fa" stroke="#55606e" stroke-width="0.9"/></svg>
<span class="t" style="left:57.1px;top:385.55px;font-size:9.5px;line-height:13.5px;color:#1c1c1c;letter-spacing:-0.107px;">UNMATCHED TASKS</span>
<div style="left:28px;top:400.9px;width:10.4px;height:10.6px;background:#fff;border:1px solid #9a9a9a;box-sizing:border-box;"></div>
<svg style="left:38.0px;top:400.7px;" width="15.5" height="11" viewBox="0 0 15.5 11"><path d="M3.5 0.8 H14.6 L11.5 4 H0.6 Z" fill="#e8f1fa" stroke="#55606e" stroke-width="0.9"/><path d="M3.5 3.6 H14.6 L11.5 6.8 H0.6 Z" fill="#3f8fd9" stroke="#2f6fae" stroke-width="0.6"/><path d="M3.5 6.4 H14.6 L11.5 9.8 H0.6 Z" fill="#e8f1fa" stroke="#55606e" stroke-width="0.9"/></svg>
<span class="t" style="left:57.1px;top:399.65px;font-size:9.5px;line-height:13.5px;color:#1c1c1c;letter-spacing:-0.150px;">MISMATCHED TASK GRAPHICS</span>
<svg style="left:16px;top:416.79999999999995px;" width="7" height="7" viewBox="0 0 7 7"><path d="M6.3 0.7 V6.3 H0.7 Z" fill="#585858"/></svg>
<div style="left:28px;top:414.99999999999994px;width:10.4px;height:10.6px;background:#fff;border:1px solid #9a9a9a;box-sizing:border-box;"></div>
<svg style="left:38.0px;top:414.79999999999995px;" width="15.5" height="11" viewBox="0 0 15.5 11"><path d="M3.5 0.8 H14.6 L11.5 4 H0.6 Z" fill="#e8f1fa" stroke="#55606e" stroke-width="0.9"/><path d="M3.5 3.6 H14.6 L11.5 6.8 H0.6 Z" fill="#3f8fd9" stroke="#2f6fae" stroke-width="0.6"/><path d="M3.5 6.4 H14.6 L11.5 9.8 H0.6 Z" fill="#e8f1fa" stroke="#55606e" stroke-width="0.9"/></svg>
<span class="t" style="left:57.1px;top:413.75px;font-size:9.5px;line-height:13.5px;color:#1c1c1c;letter-spacing:-0.106px;">BLOCK MODEL SLICES</span>
<div style="left:44px;top:429.09999999999997px;width:10.4px;height:10.6px;background:#fff;border:1px solid #9a9a9a;box-sizing:border-box;"></div>
<svg style="left:54.0px;top:428.9px;" width="15.5" height="11" viewBox="0 0 15.5 11"><path d="M3.5 0.8 H14.6 L11.5 4 H0.6 Z" fill="#e8f1fa" stroke="#55606e" stroke-width="0.9"/><path d="M3.5 3.6 H14.6 L11.5 6.8 H0.6 Z" fill="#3f8fd9" stroke="#2f6fae" stroke-width="0.6"/><path d="M3.5 6.4 H14.6 L11.5 9.8 H0.6 Z" fill="#e8f1fa" stroke="#55606e" stroke-width="0.9"/></svg>
<span class="t" style="left:72.69999999999999px;top:427.85px;font-size:9.5px;line-height:13.5px;color:#1c1c1c;letter-spacing:-0.226px;">SLICE 1</span>
<div style="left:8.5px;top:1167.4px;width:26px;height:19px;background:#f1f1f1;border:1px solid #dcdcdc;box-sizing:border-box;"></div>
<svg style="left:14.0px;top:1170px;" width="15" height="14" viewBox="0 0 15 14"><path d="M5 1.5 H14 L11 4.5 H2 Z" fill="#eaf2fa" stroke="#55606e" stroke-width="0.8"/><circle cx="8" cy="8.6" r="3.2" fill="#f1f1f1" stroke="#3f8fd9" stroke-width="1.4"/></svg>
<div style="left:39px;top:1167.4px;width:26px;height:19px;background:#f1f1f1;border:1px solid #dcdcdc;box-sizing:border-box;"></div>
<svg style="left:44.5px;top:1170px;" width="15" height="14" viewBox="0 0 15 14"><path d="M4 0.8 H13 L10 3.6 H1 Z" fill="#eaf2fa" stroke="#55606e" stroke-width="0.8"/><path d="M4 3.4 H13 L10 6.2 H1 Z" fill="#3f8fd9"/><path d="M4 5.8 H13 L10 8.8 H1 Z" fill="#eaf2fa" stroke="#55606e" stroke-width="0.8"/><ellipse cx="7" cy="10" rx="3.6" ry="2.2" fill="#3f8fd9"/><circle cx="7" cy="10" r="0.9" fill="#fff"/></svg>
<div style="left:70px;top:1167.4px;width:26px;height:19px;background:#f1f1f1;border:1px solid #dcdcdc;box-sizing:border-box;"></div>
<svg style="left:75.5px;top:1170px;" width="15" height="14" viewBox="0 0 15 14"><path d="M4 0.8 H13 L10 3.6 H1 Z" fill="#eaf2fa" stroke="#55606e" stroke-width="0.8"/><path d="M4 3.4 H13 L10 6.2 H1 Z" fill="#3f8fd9"/><path d="M4 5.8 H13 L10 8.8 H1 Z" fill="#eaf2fa" stroke="#55606e" stroke-width="0.8"/><rect x="7" y="8" width="4.6" height="4.6" fill="#eee" stroke="#444" stroke-width="0.9"/></svg>
<div style="left:100.8px;top:1167.4px;width:26px;height:19px;background:#f1f1f1;border:1px solid #dcdcdc;box-sizing:border-box;"></div>
<svg style="left:106.3px;top:1170px;" width="15" height="14" viewBox="0 0 15 14"><path d="M4 0.8 H13 L10 3.6 H1 Z" fill="#eaf2fa" stroke="#55606e" stroke-width="0.8"/><path d="M4 3.4 H13 L10 6.2 H1 Z" fill="#3f8fd9"/><path d="M4 5.8 H13 L10 8.8 H1 Z" fill="#eaf2fa" stroke="#55606e" stroke-width="0.8"/><circle cx="8" cy="9" r="2.6" fill="#f1f1f1" stroke="#444" stroke-width="1"/><path d="M10 11 L12 13" stroke="#444" stroke-width="1.2"/></svg>
<div style="left:131.4px;top:1167.4px;width:26px;height:19px;background:#f1f1f1;border:1px solid #dcdcdc;box-sizing:border-box;"></div>
<svg style="left:136.9px;top:1170px;" width="15" height="14" viewBox="0 0 15 14"><path d="M4 0.8 H13 L10 3.6 H1 Z" fill="#eaf2fa" stroke="#55606e" stroke-width="0.8"/><path d="M4 3.4 H13 L10 6.2 H1 Z" fill="#3f8fd9"/><path d="M4 5.8 H13 L10 8.8 H1 Z" fill="#eaf2fa" stroke="#55606e" stroke-width="0.8"/><path d="M4 8 H8.5 L7 10 V13 L5.6 12 V10 Z" fill="#444"/><path d="M9.5 9 L13 12.8 M13 9 L9.5 12.8" stroke="#e02020" stroke-width="1.4"/></svg>
<span class="t" style="left:161.7px;top:1166.45px;font-size:9.5px;line-height:13.5px;color:#3c3c3c;letter-spacing:-0.098px;">2 Layers not displayed</span>
<div style="left:8px;top:1190px;width:72.5px;height:21px;background:#fdfdfd;border:1px solid #e6e6e6;box-sizing:border-box;border-top:none;"></div>
<span class="t" style="left:17.2px;top:1194.35px;font-size:9.5px;line-height:13.5px;color:#2f6eb3;letter-spacing:-0.140px;">Layer Control</span>
<span class="t" style="left:88.6px;top:1194.35px;font-size:9.5px;line-height:13.5px;color:#444;letter-spacing:-0.145px;">Geomodel Display</span>
<span class="t" style="left:179.5px;top:1194.35px;font-size:9.5px;line-height:13.5px;color:#444;letter-spacing:-0.070px;">Deswik.IS</span>
<div style="left:171.4px;top:1193px;width:1px;height:15px;background:#dedede;"></div>
<div style="left:227.2px;top:1193px;width:1px;height:15px;background:#dedede;"></div>
<div style="left:168.4px;top:1215px;width:1px;height:16px;background:#dadada;"></div>
<span class="t" style="left:177.5px;top:1217.25px;font-size:9.5px;line-height:13.5px;color:#3c3c3c;letter-spacing:0.061px;">X: 799,994.049</span>
<span class="t" style="left:269.4px;top:1217.25px;font-size:9.5px;line-height:13.5px;color:#3c3c3c;letter-spacing:0.204px;">Y: 7,637,119.766</span>
<span class="t" style="left:364.5px;top:1217.25px;font-size:9.5px;line-height:13.5px;color:#3c3c3c;letter-spacing:0.088px;">Z: 258.750</span>
<div style="left:313px;top:158.7px;width:1690px;height:855.5px;background:#000;"></div>
<svg style="left:313px;top:158.7px" width="1690" height="855.5" viewBox="313 158.7 1690 855.5"><defs><linearGradient id="gG" gradientUnits="userSpaceOnUse" x1="560" y1="240" x2="640" y2="330"><stop offset="0" stop-color="#44d832"/><stop offset="0.45" stop-color="#32b022"/><stop offset="1" stop-color="#2da41c"/></linearGradient><linearGradient id="gT" gradientUnits="userSpaceOnUse" x1="700" y1="380" x2="686" y2="408"><stop offset="0" stop-color="#1fa68a"/><stop offset="0.5" stop-color="#27b497"/><stop offset="1" stop-color="#35c8a8"/></linearGradient><linearGradient id="gY" gradientUnits="userSpaceOnUse" x1="1040" y1="560" x2="1350" y2="725"><stop offset="0" stop-color="#b4ae28"/><stop offset="0.5" stop-color="#aea726"/><stop offset="0.64" stop-color="#b6b028"/><stop offset="0.8" stop-color="#c6c02c"/><stop offset="1" stop-color="#cec82e"/></linearGradient><linearGradient id="gR" gradientUnits="userSpaceOnUse" x1="950" y1="352" x2="926" y2="388"><stop offset="0" stop-color="#9c1717"/><stop offset="0.35" stop-color="#c42222"/><stop offset="0.75" stop-color="#ec2e2e"/><stop offset="1" stop-color="#d82828"/></linearGradient><linearGradient id="gP" gradientUnits="userSpaceOnUse" x1="1510" y1="808" x2="1490" y2="850"><stop offset="0" stop-color="#2b1b92"/><stop offset="0.4" stop-color="#3a22c4"/><stop offset="0.75" stop-color="#5230fa"/><stop offset="1" stop-color="#4a2ae6"/></linearGradient><linearGradient id="gL" gradientUnits="userSpaceOnUse" x1="1740" y1="925" x2="1715" y2="968"><stop offset="0" stop-color="#86d424"/><stop offset="0.4" stop-color="#a4f632"/><stop offset="0.8" stop-color="#9cf02c"/><stop offset="1" stop-color="#7fca22"/></linearGradient><linearGradient id="gO1" gradientUnits="userSpaceOnUse" x1="1010" y1="405" x2="990" y2="455"><stop offset="0" stop-color="#c87424"/><stop offset="0.4" stop-color="#e6872b"/><stop offset="1" stop-color="#dc7f28"/></linearGradient><linearGradient id="gO2" gradientUnits="userSpaceOnUse" x1="1090" y1="440" x2="1060" y2="490"><stop offset="0" stop-color="#c06e22"/><stop offset="0.45" stop-color="#e2842a"/><stop offset="1" stop-color="#e88a2c"/></linearGradient><filter id="soft" x="-5%" y="-5%" width="110%" height="110%"><feGaussianBlur stdDeviation="0.5"/></filter><filter id="soft2" x="-10%" y="-10%" width="120%" height="120%"><feGaussianBlur stdDeviation="1.2"/></filter></defs><g filter="url(#soft)"><polygon points="620.0,351.6 643.0,342.0 665.0,355.0 690.0,377.7 727.7,400.3 765.0,415.0 790.0,432.6 815.0,445.0 828.0,443.0 833.0,431.4 862.0,443.0 890.4,455.2 878.0,466.0 860.3,480.2 859.0,485.2 846.5,484.0 815.2,471.5 777.6,457.7 740.0,440.0 727.7,431.6 696.4,415.3 665.0,397.8 643.8,382.7 638.0,368.0 628.0,360.0" fill="#23ab8f" /><polygon points="640.0,374.0 665.0,388.0 700.0,408.0 740.0,428.0 790.0,452.0 830.0,468.0 852.0,478.0 846.5,484.0 815.2,471.5 777.6,457.7 740.0,440.0 727.7,431.6 696.4,415.3 665.0,397.8 643.8,382.7" fill="#2fc0a2" /><polyline points="645.0,378.0 690.0,404.0 740.0,430.0 800.0,458.0 845.0,478.0" fill="none" stroke="#58e6cc" stroke-width="1.3" stroke-linejoin="round" stroke-linecap="round" /><polyline points="652.0,368.0 700.0,396.0 760.0,426.0 820.0,453.0" fill="none" stroke="#1c9486" stroke-width="1.5" stroke-linejoin="round" stroke-linecap="round" /><polyline points="668.0,372.0 720.0,402.0 780.0,432.0 826.0,452.0" fill="none" stroke="#43d4b6" stroke-width="1.2" stroke-linejoin="round" stroke-linecap="round" /><polyline points="700.0,384.0 740.0,406.0 770.0,420.0" fill="none" stroke="#178a78" stroke-width="1.1" stroke-linejoin="round" stroke-linecap="round" /><polygon points="813.0,449.0 828.0,443.0 833.0,431.4 862.0,443.0 890.4,455.2 878.0,466.0 860.3,480.2 859.0,485.0 846.5,484.0 828.0,477.0 810.0,468.0 806.0,458.0" fill="#3cd6b6" /><polygon points="828.0,452.0 846.0,447.0 872.0,461.0 862.0,472.0 844.0,470.0" fill="#54e6c6" /><polyline points="830.0,458.0 850.0,466.0 862.0,472.0" fill="none" stroke="#2aa892" stroke-width="1.0" stroke-linejoin="round" stroke-linecap="round" /><polyline points="834.0,450.0 856.0,460.0 870.0,466.0" fill="none" stroke="#2aa892" stroke-width="0.9" stroke-linejoin="round" stroke-linecap="round" /><polygon points="676.0,340.0 710.0,355.0 728.0,368.0 753.0,385.0 790.0,403.0 822.0,421.6 833.0,431.0 833.0,436.5 828.0,443.0 815.0,445.0 790.0,432.6 765.0,415.0 744.0,410.3 727.7,400.3 690.0,377.7 665.0,355.0 668.0,345.0" fill="#22ad48" /><polyline points="680.0,343.0 712.0,358.0 752.0,386.0 790.0,404.5 822.0,422.5" fill="none" stroke="#48d66a" stroke-width="1.0" stroke-linejoin="round" stroke-linecap="round" /><polyline points="690.0,372.0 720.0,390.0 745.0,404.0" fill="none" stroke="#1a8f3a" stroke-width="1.2" stroke-linejoin="round" stroke-linecap="round" /><polyline points="672.0,356.0 694.0,376.0" fill="none" stroke="#3fd27a" stroke-width="1.2" stroke-linejoin="round" stroke-linecap="round" /><polygon points="696.0,371.0 706.0,373.0 704.0,378.0 694.0,376.0" fill="#44d6c0" /><polygon points="533.0,262.0 536.0,256.0 542.0,250.5 551.0,248.0 561.7,247.7 579.4,256.2 600.5,268.2 618.2,278.7 635.8,292.1 640.0,291.0 658.0,305.0 674.0,316.5 676.0,323.0 660.0,333.0 643.0,342.0 620.0,351.6 610.0,345.0 600.0,335.0 594.0,323.0 577.6,307.7 557.6,295.2 535.6,279.5 534.0,271.0" fill="#30a820" /><polygon points="542.0,250.5 551.0,248.0 561.7,247.7 579.4,256.2 600.5,268.2 618.2,278.7 635.8,292.1 657.0,305.5 674.0,316.5 676.0,323.0 668.0,322.0 657.0,315.4 635.8,304.1 618.2,291.4 600.5,280.1 579.4,268.9 560.0,260.0 548.0,256.0" fill="#46e432" /><polyline points="556.0,253.0 580.0,263.0 602.0,275.5 620.0,286.0 640.0,300.0 660.0,312.0" fill="none" stroke="#2ca020" stroke-width="1.4" stroke-linejoin="round" stroke-linecap="round" /><polyline points="566.0,251.0 584.0,260.0" fill="none" stroke="#2a9a1e" stroke-width="1.0" stroke-linejoin="round" stroke-linecap="round" /><polygon points="533.0,262.0 536.0,256.0 542.0,250.5 548.0,256.0 560.0,262.0 556.0,270.0 548.0,275.0 540.0,282.0 535.6,279.5 534.0,271.0" fill="#44de30" /><polyline points="536.0,266.0 548.0,272.0 558.0,279.0" fill="none" stroke="#2a9c1e" stroke-width="1.2" stroke-linejoin="round" stroke-linecap="round" /><polyline points="538.0,274.0 552.0,284.0 566.0,294.0 574.0,300.0" fill="none" stroke="#48e636" stroke-width="1.8" stroke-linejoin="round" stroke-linecap="round" /><polyline points="540.0,281.0 556.0,292.0 572.0,303.0" fill="none" stroke="#3ccc2c" stroke-width="1.4" stroke-linejoin="round" stroke-linecap="round" /><polyline points="557.6,295.2 577.6,307.7 594.0,323.0 600.0,335.0 610.0,345.0 620.0,351.0" fill="none" stroke="#3cc62c" stroke-width="1.6" stroke-linejoin="round" stroke-linecap="round" /><polyline points="596.0,318.0 604.0,334.0 614.0,344.0" fill="none" stroke="#4ae838" stroke-width="1.2" stroke-linejoin="round" stroke-linecap="round" /><polyline points="583.0,300.0 590.0,297.0 598.0,303.0" fill="none" stroke="#1c8012" stroke-width="1.1" stroke-linejoin="round" stroke-linecap="round" /><polyline points="600.0,300.0 626.0,318.0 648.0,332.0" fill="none" stroke="#279a1a" stroke-width="1.1" stroke-linejoin="round" stroke-linecap="round" /><polyline points="563.2,238.5 570.0,237.5 593.5,250.5 621.7,266.7 630.9,275.9" fill="none" stroke="#48e234" stroke-width="1.2" stroke-linejoin="round" stroke-linecap="round" /><polygon points="561.5,243.5 563.0,237.5 567.0,236.5 569.0,241.0 566.0,245.0" fill="#46e432" /><polygon points="585.0,248.0 591.0,246.5 597.0,253.0 603.0,258.5 598.0,259.0 590.0,254.0" fill="#46e432" /><polygon points="612.0,267.0 618.0,264.0 624.0,268.0 628.0,276.0 624.0,281.0 618.0,276.0" fill="#46e432" /><polygon points="676.0,323.0 679.0,316.0 675.0,331.0 672.0,345.0 660.0,352.0 640.0,361.0 628.0,360.0 620.0,351.6 643.0,342.0 660.0,333.0" fill="#36bf7c" /><polygon points="650.0,340.0 672.0,326.0 670.0,340.0 655.0,350.0" fill="#52d08a" /><polyline points="620.0,351.6 643.0,342.0 660.0,333.0 676.0,323.0" fill="none" stroke="#7cf0b8" stroke-width="1.0" stroke-linejoin="round" stroke-linecap="round" /><polyline points="643.0,342.0 652.0,358.0" fill="none" stroke="#7ce8c0" stroke-width="0.9" stroke-linejoin="round" stroke-linecap="round" /><polygon points="640.0,290.0 644.0,288.5 662.0,301.0 679.0,313.0 682.0,320.0 677.0,323.0 674.0,316.5 658.0,305.0" fill="#46d8cc" /><polyline points="677.6,313.8 710.2,331.4 752.8,357.7 790.4,376.5 820.5,390.3" fill="none" stroke="#5cdcc8" stroke-width="2.0" stroke-linejoin="round" stroke-linecap="round" stroke-dasharray="40 2 24 2 50 2"/><polyline points="677.6,323.8 705.2,337.6 730.2,351.4 765.3,367.7 802.9,389.0 840.5,410.3 853.0,416.6 871.8,425.3" fill="none" stroke="#5cdcc8" stroke-width="2.2" stroke-linejoin="round" stroke-linecap="round" stroke-dasharray="46 2 30 2 60 2"/><polyline points="683.0,319.0 700.0,328.0 716.0,337.0" fill="none" stroke="#4cdccc" stroke-width="2.4" stroke-linejoin="round" stroke-linecap="round" /><polyline points="686.0,314.0 700.0,321.0" fill="none" stroke="#4cdccc" stroke-width="1.6" stroke-linejoin="round" stroke-linecap="round" /><polygon points="682.0,338.0 690.0,336.0 700.0,343.0 712.0,348.0 725.0,356.0 716.0,354.0 702.0,349.0 690.0,345.0" fill="#30c860" /><polyline points="700.0,352.0 715.0,360.0 728.0,366.0" fill="none" stroke="#2fc468" stroke-width="1.2" stroke-linejoin="round" stroke-linecap="round" /><polygon points="833.0,431.0 836.0,420.0 838.5,415.5 847.0,412.0 860.0,420.0 872.0,428.0 888.0,432.5 890.4,455.2 862.0,443.0" fill="#40e0c4" /><polygon points="840.0,430.0 850.5,430.0 851.0,437.5 845.0,437.0 839.5,433.0" fill="#000" /><polygon points="841.5,418.0 846.0,416.5 850.0,424.0 860.0,432.0 858.0,435.0 850.0,430.0 843.0,424.0" fill="#000" /><polygon points="847.4,417.5 872.3,429.5 886.0,435.5 886.6,444.8 872.3,439.8 859.8,432.4 849.9,424.3" fill="#000" /><polyline points="853.6,434.8 870.0,443.2 886.0,451.8" fill="none" stroke="#000" stroke-width="1.8" stroke-linejoin="round" stroke-linecap="round" /><polygon points="847.4,418.7 859.2,426.1 858.6,431.7 850.5,424.9" fill="#4cecd4" /><polyline points="838.5,424.0 843.0,417.0 847.4,412.6" fill="none" stroke="#4cecd4" stroke-width="2.4" stroke-linejoin="round" stroke-linecap="round" /><polygon points="871.6,423.8 885.0,426.0 905.0,438.0 922.0,450.0 935.0,462.0 958.0,478.0 975.0,489.0 992.0,499.0 1012.0,514.0 1035.0,530.0 1055.0,545.0 1070.0,556.0 1075.0,566.0 1068.0,581.6 1065.5,569.0 1055.4,560.3 1032.9,550.3 1005.3,530.2 980.3,512.7 955.2,497.6 917.6,475.1 890.4,455.2 888.5,433.5 878.0,429.0" fill="#2fb4ee" /><polygon points="1070.0,556.0 1090.0,566.0 1105.6,575.0 1121.0,585.0 1121.0,588.0 1103.0,577.5 1085.0,571.0 1070.0,565.0" fill="#2fb4ee" /><polyline points="915.4,446.4 940.5,460.2 992.8,486.3 1009.4,510.3 1042.9,530.2 1071.7,547.0 1105.6,571.0 1130.6,586.0 1155.7,596.6" fill="none" stroke="#3cc6e8" stroke-width="2.2" stroke-linejoin="round" stroke-linecap="round" stroke-dasharray="22 4 12 3 30 5 16 3"/><polygon points="944.0,470.0 956.0,474.0 962.0,481.0 950.0,478.0" fill="#38c0e8" /><polygon points="975.0,480.0 990.0,488.0 996.0,494.0 982.0,490.0" fill="#38c0e8" /><polygon points="1000.0,497.0 1010.0,502.0 1014.0,510.0 1004.0,506.0" fill="#38c0e8" /><polygon points="1026.0,524.0 1040.0,532.0 1046.0,538.0 1032.0,533.0" fill="#38c0e8" /><polygon points="1056.0,544.0 1068.0,550.0 1062.0,552.0" fill="#38c0e8" /><polygon points="859.0,485.2 880.0,502.6 905.0,518.0 930.0,536.0 923.9,544.0 924.0,550.0 940.0,560.0 967.7,575.3 1005.3,594.1 1043.0,607.0 1070.0,625.0 1095.5,637.0 1103.0,640.0 1100.0,631.0 1073.0,610.0 1058.0,596.0 1062.0,589.0 1051.7,592.9 1030.4,591.6 992.8,575.3 967.7,556.5 930.0,536.5 880.0,502.6" fill="#2fb4ee" /><polygon points="924.0,544.0 950.0,552.0 990.0,574.0 1030.0,592.0 1058.0,598.0 1073.0,610.0 1100.0,631.0 1103.0,640.0 1095.5,637.0 1070.0,625.0 1043.0,607.0 1005.3,594.1 967.7,575.3 940.0,560.0 924.0,550.0" fill="#2a9ede" /><polygon points="890.4,455.2 892.5,457.5 917.6,475.1 955.2,497.6 980.3,512.7 1005.3,530.2 1032.9,550.3 1055.4,560.3 1065.5,569.0 1068.0,581.6 1062.0,589.0 1051.7,592.9 1030.4,591.6 992.8,575.3 967.7,556.5 930.0,536.5 880.0,502.6 859.0,485.2 860.3,480.2 878.0,466.0" fill="#2239ae" /><polygon points="896.0,452.0 925.0,458.0 960.0,478.0 995.0,500.0 1020.0,520.0 1040.0,538.0 1024.0,534.0 996.0,516.0 960.0,494.0 925.0,474.0 900.0,460.0" fill="#2a4cf0" /><polyline points="885.0,478.0 930.0,505.0 975.0,532.0 1010.0,552.0" fill="none" stroke="#2f50dc" stroke-width="2.0" stroke-linejoin="round" stroke-linecap="round" /><polyline points="880.0,492.0 920.0,518.0 960.0,542.0 1000.0,566.0" fill="none" stroke="#1a2c90" stroke-width="1.6" stroke-linejoin="round" stroke-linecap="round" /><polyline points="930.0,500.0 975.0,528.0 1015.0,548.0" fill="none" stroke="#1a2a8c" stroke-width="1.3" stroke-linejoin="round" stroke-linecap="round" /><polyline points="905.0,470.0 950.0,498.0 990.0,524.0" fill="none" stroke="#14207a" stroke-width="1.2" stroke-linejoin="round" stroke-linecap="round" /><polygon points="873.0,470.0 886.0,462.0 900.0,471.0 888.0,482.0" fill="#3a6ed0" /><polyline points="873.0,470.0 886.0,462.0 900.0,471.0 888.0,482.0 873.0,470.0" fill="none" stroke="#6fb2ee" stroke-width="0.9" stroke-linejoin="round" stroke-linecap="round" /><polygon points="1005.3,545.2 1030.4,554.0 1055.4,566.5 1058.0,576.6 1043.0,580.3 1017.8,570.3 992.8,556.5" fill="#3291dc" /><polyline points="1003.0,548.0 1030.0,560.0 1052.0,572.0 1054.0,577.0" fill="none" stroke="#63c4ee" stroke-width="0.9" stroke-linejoin="round" stroke-linecap="round" /><polygon points="905.0,441.0 918.0,449.0 930.0,457.0 922.0,456.0 910.0,449.0" fill="#000" /><polygon points="940.0,470.0 955.0,481.0 968.0,490.0 958.0,488.0 944.0,477.0" fill="#000" /><polygon points="1000.0,512.0 1014.0,522.0 1024.0,530.0 1012.0,526.0" fill="#000" /><polygon points="1078.0,564.0 1092.0,571.0 1104.0,579.0 1092.0,575.0" fill="#000" /><polygon points="950.0,549.0 962.0,553.0 978.0,566.0 968.0,564.0 956.0,556.0" fill="#000" /><polygon points="1000.0,588.0 1020.0,590.0 1040.0,598.0 1052.0,600.0 1040.0,603.0 1018.0,596.0" fill="#000" /><polygon points="1058.0,596.0 1070.0,590.0 1085.0,613.0 1073.0,610.0" fill="#000" /><polygon points="855.3,509.0 866.0,513.0 880.0,522.0 899.1,535.4 886.0,531.0 870.0,522.0" fill="#2b98cc" /><polyline points="858.0,497.0 872.0,506.0" fill="none" stroke="#1f5f90" stroke-width="1.0" stroke-linejoin="round" stroke-linecap="round" /><polygon points="1032.9,549.0 1047.5,553.0 1070.0,565.0 1103.0,575.5 1121.0,587.5 1155.4,595.0 1160.0,601.0 1190.0,617.5 1202.0,626.5 1220.0,643.0 1232.0,655.0 1247.0,652.0 1286.0,664.0 1302.4,674.4 1325.0,692.4 1338.4,701.4 1348.9,709.0 1351.9,724.0 1340.0,733.0 1317.4,730.0 1280.0,709.0 1250.0,694.0 1220.0,680.5 1205.0,680.5 1182.5,677.5 1160.0,670.0 1139.0,661.0 1143.5,655.0 1124.0,641.5 1103.0,629.5 1085.0,613.0 1070.0,599.5 1050.5,593.5 1062.0,589.0 1068.0,581.6 1065.5,569.0 1055.4,560.3" fill="url(#gY)" /><polyline points="1160.0,601.0 1190.0,617.5 1202.0,626.5 1220.0,643.0 1232.0,655.0 1247.0,652.0 1286.0,664.0 1302.4,674.4 1325.0,692.4" fill="none" stroke="#dcd83c" stroke-width="1.0" stroke-linejoin="round" stroke-linecap="round" /><polyline points="1070.0,566.0 1103.0,577.0" fill="none" stroke="#d6d034" stroke-width="1.2" stroke-linejoin="round" stroke-linecap="round" /><polygon points="1121.0,587.5 1155.4,595.0 1145.0,605.5 1115.0,595.0" fill="#2fa2e2" /><polyline points="1121.0,587.5 1155.4,595.0 1145.0,605.5 1115.0,595.0 1121.0,587.5" fill="none" stroke="#6fe0d0" stroke-width="0.9" stroke-linejoin="round" stroke-linecap="round" /><polyline points="1115.0,595.0 1100.0,607.0" fill="none" stroke="#55c8c0" stroke-width="0.9" stroke-linejoin="round" stroke-linecap="round" /><polyline points="1232.0,655.0 1205.0,672.0 1190.0,680.0" fill="none" stroke="#8c861c" stroke-width="1.3" stroke-linejoin="round" stroke-linecap="round" /><polyline points="1060.0,594.0 1080.0,600.0 1096.0,606.0" fill="none" stroke="#7f8a30" stroke-width="1.4" stroke-linejoin="round" stroke-linecap="round" /><polygon points="1312.8,719.1 1326.6,703.9 1338.4,701.4 1348.9,709.0 1351.9,724.0 1340.0,733.0 1331.0,735.0" fill="#dcd62f" /><polyline points="1080.0,570.0 1095.0,578.0 1110.0,588.0" fill="none" stroke="#000" stroke-width="2.0" stroke-linejoin="round" stroke-linecap="round" /><polyline points="1100.0,574.0 1112.0,580.0" fill="none" stroke="#000" stroke-width="1.5" stroke-linejoin="round" stroke-linecap="round" /><polyline points="1220.0,636.0 1232.0,645.0 1240.0,650.0" fill="none" stroke="#c8c22c" stroke-width="1.1" stroke-linejoin="round" stroke-linecap="round" /><polyline points="1253.0,650.0 1270.0,656.0 1282.0,661.0" fill="none" stroke="#c8c22c" stroke-width="1.1" stroke-linejoin="round" stroke-linecap="round" /><polyline points="1300.4,672.6 1312.8,681.6 1327.3,694.4 1333.9,701.0" fill="none" stroke="#000" stroke-width="1.6" stroke-linejoin="round" stroke-linecap="round" /><polyline points="1300.4,670.6 1312.8,679.0 1327.3,692.0 1333.9,699.3" fill="none" stroke="#cfca30" stroke-width="1.3" stroke-linejoin="round" stroke-linecap="round" /><polyline points="1253.0,650.5 1270.6,657.0 1286.6,664.0" fill="none" stroke="#000" stroke-width="1.3" stroke-linejoin="round" stroke-linecap="round" /><polyline points="1240.0,690.8 1258.2,696.6 1276.4,704.6 1294.6,714.0 1312.8,722.8" fill="none" stroke="#d8d23a" stroke-width="1.0" stroke-linejoin="round" stroke-linecap="round" /><polygon points="843.2,322.6 847.5,310.0 860.1,304.4 871.4,306.3 886.4,317.6 911.5,336.4 936.5,348.9 955.3,358.9 974.1,365.2 987.9,376.5 992.9,385.2 999.2,391.5 995.4,399.0 986.6,404.0 974.1,401.5 967.8,405.3 955.3,405.3 936.5,395.3 924.0,386.5 907.7,385.2 897.7,385.9 892.0,382.7 911.5,377.1 900.2,367.7 880.1,351.4 861.3,336.4 847.5,330.1" fill="#d42626" /></g><g filter="url(#soft2)"><polyline points="850.0,312.0 862.0,308.0 884.0,320.0 910.0,339.0 936.0,352.0 958.0,363.0 976.0,370.0 988.0,381.0" fill="none" stroke="#9a1616" stroke-width="5" stroke-linejoin="round" stroke-linecap="round" /><polyline points="852.0,324.0 866.0,334.0 886.0,350.0 908.0,368.0 926.0,380.0 946.0,392.0 966.0,398.0 984.0,396.0" fill="none" stroke="#f23232" stroke-width="6" stroke-linejoin="round" stroke-linecap="round" /></g><g filter="url(#soft)"><polygon points="965.1,417.8 975.3,413.6 994.0,407.6 1002.4,405.1 1010.9,405.1 1019.4,411.0 1027.9,419.5 1034.3,422.9 1033.9,431.4 1030.5,434.0 1026.2,442.4 1015.2,452.6 1002.4,459.4 996.5,457.7 992.3,450.9 981.2,439.9 972.7,427.2" fill="url(#gO1)" /><polygon points="1044.9,442.4 1053.4,434.8 1064.4,431.8 1078.8,433.5 1087.3,439.9 1095.8,452.6 1102.6,470.5 1108.6,485.7 1104.3,493.4 1094.1,499.3 1084.8,498.5 1078.8,491.7 1066.1,481.5 1053.4,467.9 1048.3,455.2" fill="url(#gO2)" /><polygon points="1419.3,784.0 1421.5,782.6 1424.5,786.0 1423.0,793.5 1420.0,792.0" fill="#3c28c0" /><polygon points="1424.9,795.4 1433.8,783.1 1450.7,785.6 1471.1,788.6 1486.4,797.1 1503.4,809.0 1511.9,810.7 1520.4,819.1 1528.8,819.1 1545.8,830.2 1567.0,842.9 1578.9,853.1 1571.3,860.7 1559.4,870.1 1545.8,871.8 1528.8,868.4 1511.9,859.9 1494.9,849.7 1477.9,839.5 1460.9,832.7 1449.9,825.9 1450.7,817.4 1435.5,806.4" fill="url(#gP)" /></g><g filter="url(#soft2)"><polygon points="1434.5,784.5 1450.7,786.6 1471.1,789.6 1486.4,798.1 1503.4,810.0 1511.9,811.7 1520.4,820.1 1528.8,820.1 1545.8,831.2 1567.0,843.9 1576.0,852.5 1570.0,856.0 1552.0,849.0 1528.0,835.0 1504.0,821.0 1480.0,808.0 1460.0,799.0 1442.0,793.0 1431.0,790.0" fill="#2d1c98" /><polyline points="1432.0,799.0 1452.0,812.0 1480.0,828.0 1510.0,848.0 1540.0,863.0 1558.0,866.0" fill="none" stroke="#5a36ff" stroke-width="4" stroke-linejoin="round" stroke-linecap="round" /></g><g filter="url(#soft)"><polygon points="1665.9,943.1 1671.8,934.5 1683.1,927.9 1696.3,924.2 1709.5,926.5 1722.8,931.2 1726.1,928.5 1726.1,924.6 1732.7,924.6 1742.6,929.2 1751.9,933.8 1758.5,940.4 1769.0,947.7 1779.0,953.0 1784.9,957.6 1782.3,964.9 1772.4,972.8 1757.1,976.8 1745.9,971.5 1729.4,966.9 1716.1,968.2 1702.9,964.2 1689.7,958.3 1676.5,951.0" fill="url(#gL)" /><polyline points="1676.0,949.0 1700.0,960.0 1730.0,964.0 1752.0,972.0" fill="none" stroke="#78c020" stroke-width="2" stroke-linejoin="round" stroke-linecap="round" /><polyline points="1730.0,930.0 1748.0,938.0 1766.0,952.0" fill="none" stroke="#7cc824" stroke-width="2.5" stroke-linejoin="round" stroke-linecap="round" /><circle cx="1741" cy="947.5" r="1.4" fill="#b83a10"/></g></svg>
<svg style="left:580px;top:555px;" width="75" height="50" viewBox="0 0 75 50"><g stroke="#cfcfcf" stroke-width="0.9" fill="none"><path d="M7.1 20.3 L65 31"/><path d="M43.7 6 L28.5 45.2"/><rect x="32.2" y="22.4" width="6.4" height="6" transform="rotate(10 35.4 25.4)"/></g></svg>
<svg style="left:325px;top:955px;" width="50" height="45" viewBox="0 0 50 45"><g>
<path d="M11.5 35.3 L11.6 22" stroke="#1818e8" stroke-width="1.3"/><path d="M8.4 27 L11.5 17.5 L14.8 27 Z" fill="#1a1af0"/>
<path d="M11.5 35.3 L16 24" stroke="#12a012" stroke-width="1.1"/><path d="M14 27.5 L17.6 19.5 L18.8 28.5 Z" fill="#14a814"/>
<path d="M11.5 35.3 L28 38.2" stroke="#f01818" stroke-width="1.5"/><path d="M26.5 34.5 L35 39 L26 42.5 Z" fill="#f21a1a"/>
<g stroke="#e6e6e6" stroke-width="1.1" fill="none"><path d="M14.6 5.8 H20 L14.4 12 H20.2"/><path d="M22 14.5 L24.8 18 L27.8 14.2 M24.8 18 V20.8"/><path d="M36.3 31.8 L42.3 37.8 M42.3 31.8 L36.3 37.8"/></g></g></svg>
<svg style="left:1830px;top:165px;" width="170" height="150" viewBox="0 0 170 150"><ellipse cx="87.9" cy="95.5" rx="71" ry="45.6" fill="#262626"/><ellipse cx="88.3" cy="92.7" rx="57" ry="32.6" fill="#000"/>
<polygon points="68.6,18.2 121.3,26.3 108.7,59.1 52.6,50.1" fill="#b9b9b9"/>
<polygon points="52.6,50.1 108.7,59.1 107.5,100.8 55.1,90.8" fill="#b1b1b1"/>
<polygon points="108.7,59.1 121.3,26.3 120,68 107.5,100.8" fill="#a2a2a2"/>
<polygon points="73.8,41.3 93.9,43.8 90.2,55.1 71.4,52.6" fill="#9ca0b1"/>
<polygon points="71.4,52.6 90.2,55.1 89.6,71.4 71.7,68.3" fill="#979bad"/>
<path d="M52.6 50.1 L108.7 59.1 L121.3 26.3 M108.7 59.1 L107.5 100.8" fill="none" stroke="#7d7d7d" stroke-width="0.9"/>
<g fill="#5e5e5e" font-family="Liberation Sans, sans-serif" font-style="italic">
<text x="78" y="40.5" font-size="7.6" letter-spacing="1.2" transform="rotate(8 88 37)">TOP</text>
<text x="61" y="78.5" font-size="8.2" letter-spacing="1.3" transform="rotate(9 80 77)">FRONT</text></g>
<g fill="#8c8c8c" font-family="Liberation Sans, sans-serif" font-style="italic">
<text x="24" y="79" font-size="12" transform="rotate(-22 29 75)">W</text>
<text x="147" y="101" font-size="12" transform="rotate(12 151 97)">E</text>
<text x="65" y="137" font-size="12.5" transform="rotate(10 70 133)">S</text></g>
<g stroke="#8a8a8a" stroke-width="1" fill="none"><path d="M113 62 L117 51 M112.6 70 L116.6 59 M112.2 78 L116.2 67"/></g></svg>
<div style="left:313.3px;top:362.5px;width:27px;height:449.5px;background:#f1f1f1;"></div>
<div style="left:315.5px;top:391.7px;width:22.4px;height:66px;background:#cdcdcd;"></div>
<div style="left:315.5px;top:481px;width:22.4px;height:21.3px;background:#cdcdcd;"></div>
<div style="left:315.5px;top:548px;width:22.4px;height:21px;background:#cdcdcd;"></div>
<div style="left:315.5px;top:686.7px;width:22.4px;height:21.3px;background:#cdcdcd;"></div>
<div style="left:315.5px;top:731.3px;width:22.4px;height:21.4px;background:#cdcdcd;"></div>
<div style="left:316.3px;top:387.5px;width:21px;height:1px;background:#e0e0e0;"></div>
<div style="left:316.3px;top:661.5px;width:21px;height:1px;background:#e0e0e0;"></div>
<div style="left:316.3px;top:778px;width:21px;height:1px;background:#e0e0e0;"></div>
<svg style="left:318.6px;top:367.2px;" width="16" height="16" viewBox="0 0 16 16"><circle cx="7" cy="7" r="5" fill="none" stroke="#e0263a" stroke-width="1.4"/><path d="M3.5 3.5 L10.5 10.5" stroke="#e0263a" stroke-width="1.4"/><circle cx="12.5" cy="12.5" r="1.3" fill="#fff" stroke="#3d8fd6" stroke-width="0.8"/></svg>
<svg style="left:318.6px;top:394.4px;" width="16" height="16" viewBox="0 0 16 16"><path d="M2.5 13 L13 3" stroke="#444" stroke-width="1.1"/><circle cx="2.8" cy="12.8" r="1.4" fill="#fff" stroke="#3d8fd6" stroke-width="0.8"/><circle cx="13" cy="3" r="1.4" fill="#fff" stroke="#3d8fd6" stroke-width="0.8"/></svg>
<svg style="left:318.6px;top:416.7px;" width="16" height="16" viewBox="0 0 16 16"><path d="M2.5 13.5 L13.5 2.5" stroke="#444" stroke-width="1.1"/><circle cx="8" cy="8" r="1.5" fill="#fff" stroke="#3d8fd6" stroke-width="0.8"/></svg>
<svg style="left:318.6px;top:440.0px;" width="16" height="16" viewBox="0 0 16 16"><path d="M2.5 13.5 L13.5 2.5" stroke="#444" stroke-width="1.1"/><circle cx="8.5" cy="7.5" r="1.5" fill="#fff" stroke="#3d8fd6" stroke-width="0.8"/><circle cx="12.3" cy="12" r="1.4" fill="none" stroke="#444" stroke-width="0.9"/></svg>
<svg style="left:318.6px;top:462.3px;" width="16" height="16" viewBox="0 0 16 16"><path d="M2.5 13 L7.5 8" stroke="#333" stroke-width="3"/><path d="M8 7.6 L12 3.6" stroke="#3d8fd6" stroke-width="2.6"/><circle cx="13" cy="12.5" r="1.4" fill="none" stroke="#444" stroke-width="0.9"/></svg>
<svg style="left:318.6px;top:485.6px;" width="16" height="16" viewBox="0 0 16 16"><path d="M8 2 V12.5 M2 12.5 H14" stroke="#444" stroke-width="1.1"/><circle cx="8" cy="12.5" r="1.3" fill="#3d8fd6"/></svg>
<svg style="left:318.6px;top:506.5px;" width="16" height="16" viewBox="0 0 16 16"><circle cx="8" cy="8" r="2" fill="#fff" stroke="#3d8fd6" stroke-width="1"/></svg>
<svg style="left:318.6px;top:528.6px;" width="16" height="16" viewBox="0 0 16 16"><path d="M2.5 2.5 L13.5 13.5 M13.5 2.5 L2.5 13.5" stroke="#444" stroke-width="1.1"/><circle cx="8" cy="8" r="1" fill="#3d8fd6"/></svg>
<svg style="left:318.6px;top:550.6px;" width="16" height="16" viewBox="0 0 16 16"><path d="M2.5 2.5 L6.5 6.5 M9.5 9.5 L13.5 13.5 M13.5 2.5 L9.5 6.5 M6.5 9.5 L2.5 13.5" stroke="#444" stroke-width="1.1"/><circle cx="8" cy="8" r="1.2" fill="#3d8fd6"/></svg>
<svg style="left:318.6px;top:572.9px;" width="16" height="16" viewBox="0 0 16 16"><path d="M8 2 L14 8 L8 14 L2 8 Z" fill="none" stroke="#444" stroke-width="1.1"/><circle cx="8" cy="8" r="1.3" fill="#fff" stroke="#3d8fd6" stroke-width="0.8"/></svg>
<svg style="left:318.6px;top:595.3px;" width="16" height="16" viewBox="0 0 16 16"><circle cx="8" cy="8" r="5.8" fill="none" stroke="#444" stroke-width="1.1"/><circle cx="8" cy="8" r="1.3" fill="#fff" stroke="#3d8fd6" stroke-width="0.8"/><circle cx="10.6" cy="10.6" r="1.3" fill="none" stroke="#444" stroke-width="0.8"/></svg>
<svg style="left:318.6px;top:618.6px;" width="16" height="16" viewBox="0 0 16 16"><circle cx="7.6" cy="8.6" r="5.6" fill="none" stroke="#444" stroke-width="1.1"/><path d="M9 2.2 L13 4.5 L10.5 7" fill="none" stroke="#3d8fd6" stroke-width="1.1"/></svg>
<svg style="left:318.6px;top:640.3px;" width="16" height="16" viewBox="0 0 16 16"><circle cx="8" cy="8" r="5.4" fill="none" stroke="#444" stroke-width="1.1"/><g fill="#fff" stroke="#3d8fd6" stroke-width="0.8"><circle cx="8" cy="2.6" r="1.2"/><circle cx="8" cy="13.4" r="1.2"/><circle cx="2.6" cy="8" r="1.2"/><circle cx="13.4" cy="8" r="1.2"/></g></svg>
<svg style="left:318.6px;top:667.0px;" width="16" height="16" viewBox="0 0 16 16"><circle cx="3.6" cy="4" r="1.6" fill="none" stroke="#3d8fd6" stroke-width="0.9"/><text x="8.2" y="15.8" font-size="13.5" font-family="Liberation Sans, sans-serif" fill="#333">1</text></svg>
<svg style="left:318.6px;top:689.4px;" width="16" height="16" viewBox="0 0 16 16"><path d="M3 13 L8 5.5 L13 13" fill="none" stroke="#444" stroke-width="1.1"/><circle cx="3" cy="13" r="1.3" fill="#fff" stroke="#444" stroke-width="0.8"/><circle cx="13" cy="13" r="1.3" fill="#fff" stroke="#444" stroke-width="0.8"/><path d="M3.5 1.5 V5 M1.8 3.2 H5.2" stroke="#3d8fd6" stroke-width="0.9"/><rect x="6.8" y="3.6" width="2.4" height="2.4" fill="none" stroke="#3d8fd6" stroke-width="0.7"/></svg>
<svg style="left:318.6px;top:711.3px;" width="16" height="16" viewBox="0 0 16 16"><rect x="2" y="2" width="12" height="12" fill="#fff" stroke="#444" stroke-width="1.1"/><path d="M5 5 H11 L5 11 H11" fill="none" stroke="#3d8fd6" stroke-width="1.2"/></svg>
<svg style="left:318.6px;top:734.0px;" width="16" height="16" viewBox="0 0 16 16"><circle cx="3.6" cy="4" r="1.6" fill="none" stroke="#3d8fd6" stroke-width="0.9"/><path d="M8 9 V7 C8 4.4 12.4 4.4 12.4 7 V9" fill="none" stroke="#444" stroke-width="1.2"/><rect x="6.8" y="8.8" width="6.8" height="5.6" fill="#444"/></svg>
<svg style="left:318.6px;top:756.0px;" width="16" height="16" viewBox="0 0 16 16"><circle cx="8" cy="8" r="2" fill="none" stroke="#333" stroke-width="1"/><g stroke="#3d8fd6" stroke-width="1.1" fill="none"><path d="M2 2 L5.5 5.5 M5.5 3 V5.5 H3"/><path d="M14 2 L10.5 5.5 M10.5 3 V5.5 H13"/><path d="M2 14 L5.5 10.5 M5.5 13 V10.5 H3"/><path d="M14 14 L10.5 10.5 M10.5 13 V10.5 H13"/></g></svg>
<svg style="left:318.6px;top:782.5px;" width="16" height="16" viewBox="0 0 16 16"><circle cx="5" cy="8" r="0.7" fill="#555"/><circle cx="8" cy="8" r="0.7" fill="#555"/><circle cx="11" cy="8" r="0.7" fill="#555"/></svg>
<svg style="left:323.5px;top:801.8px;" width="4" height="5" viewBox="0 0 4 5"><path d="M0.5 0.3 L3.3 2.4 L0.5 4.5 Z" fill="#333"/></svg>
<div style="left:1976px;top:357.8px;width:27px;height:458px;background:#f1f1f1;"></div>
<div style="left:1978.3px;top:713px;width:22.4px;height:44.5px;background:#cdcdcd;"></div>
<div style="left:1979px;top:451.3px;width:21px;height:1px;background:#e0e0e0;"></div>
<div style="left:1979px;top:522.3px;width:21px;height:1px;background:#e0e0e0;"></div>
<div style="left:1979px;top:616.9px;width:21px;height:1px;background:#e0e0e0;"></div>
<div style="left:1979px;top:781.8px;width:21px;height:1px;background:#e0e0e0;"></div>
<svg style="left:1981.0px;top:364.3px;" width="16" height="16" viewBox="0 0 16 16"><polygon points="2,5 5,2 14,2 11,5" fill="#3f8fd8"/><g fill="none" stroke="#444" stroke-width="0.9"><rect x="2" y="5" width="9" height="9"/><rect x="5" y="2" width="9" height="9"/><path d="M2 5 L5 2 M11 5 L14 2 M2 14 L5 11 M11 14 L14 11"/></g></svg>
<svg style="left:1981.0px;top:386.2px;" width="16" height="16" viewBox="0 0 16 16"><polygon points="2,5 5,2 14,2 11,5" fill="#3f8fd8"/><g fill="none" stroke="#9a9a9a" stroke-width="0.9"><rect x="2" y="5" width="9" height="9"/><path d="M11 5 L14 2 V11 L11 14"/></g><path d="M4 9.5 L6.8 7 V8.6 C9.5 8.6 10 10 9.8 12.5 C9 11 8.4 10.6 6.8 10.6 V12 Z" fill="#3f8fd8"/></svg>
<svg style="left:1981.0px;top:409.0px;" width="16" height="16" viewBox="0 0 16 16"><polygon points="2,14 5,11 14,11 11,14" fill="#3f8fd8"/><g fill="none" stroke="#444" stroke-width="0.9"><rect x="2" y="5" width="9" height="9"/><rect x="5" y="2" width="9" height="9"/><path d="M2 5 L5 2 M11 5 L14 2 M2 14 L5 11 M11 14 L14 11"/></g></svg>
<svg style="left:1981.0px;top:431.3px;" width="16" height="16" viewBox="0 0 16 16"><polygon points="5,2 14,2 14,11 5,11" fill="#3f8fd8"/><g fill="none" stroke="#444" stroke-width="0.9"><rect x="2" y="5" width="9" height="9"/><rect x="5" y="2" width="9" height="9"/><path d="M2 5 L5 2 M11 5 L14 2 M2 14 L5 11 M11 14 L14 11"/></g></svg>
<svg style="left:1981.0px;top:457.4px;" width="16" height="16" viewBox="0 0 16 16"><polygon points="2,5 11,5 11,14 2,14" fill="#3f8fd8"/><g fill="none" stroke="#444" stroke-width="0.9"><rect x="2" y="5" width="9" height="9"/><rect x="5" y="2" width="9" height="9"/><path d="M2 5 L5 2 M11 5 L14 2 M2 14 L5 11 M11 14 L14 11"/></g></svg>
<svg style="left:1981.0px;top:479.8px;" width="16" height="16" viewBox="0 0 16 16"><polygon points="11,5 14,2 14,11 11,14" fill="#3f8fd8"/><g fill="none" stroke="#444" stroke-width="0.9"><rect x="2" y="5" width="9" height="9"/><rect x="5" y="2" width="9" height="9"/><path d="M2 5 L5 2 M11 5 L14 2 M2 14 L5 11 M11 14 L14 11"/></g></svg>
<svg style="left:1981.0px;top:502.0px;" width="16" height="16" viewBox="0 0 16 16"><polygon points="2,5 5,2 5,11 2,14" fill="#3f8fd8"/><g fill="none" stroke="#444" stroke-width="0.9"><rect x="2" y="5" width="9" height="9"/><rect x="5" y="2" width="9" height="9"/><path d="M2 5 L5 2 M11 5 L14 2 M2 14 L5 11 M11 14 L14 11"/></g></svg>
<svg style="left:1981.0px;top:528.6px;" width="16" height="16" viewBox="0 0 16 16"><polygon points="8,7.8 13.5,4.5 13.5,11 8,14.5" fill="#3f8fd8"/><g fill="none" stroke="#444" stroke-width="0.9"><path d="M8 1.5 L13.5 4.5 V11 L8 14.5 L2.5 11 V4.5 Z"/><path d="M2.5 4.5 L8 7.8 L13.5 4.5 M8 7.8 V14.5"/></g></svg>
<svg style="left:1981.0px;top:551.2px;" width="16" height="16" viewBox="0 0 16 16"><polygon points="2.5,4.5 8,7.8 8,14.5 2.5,11" fill="#3f8fd8"/><g fill="none" stroke="#444" stroke-width="0.9"><path d="M8 1.5 L13.5 4.5 V11 L8 14.5 L2.5 11 V4.5 Z"/><path d="M2.5 4.5 L8 7.8 L13.5 4.5 M8 7.8 V14.5"/></g></svg>
<svg style="left:1981.0px;top:573.9px;" width="16" height="16" viewBox="0 0 16 16"><polygon points="8,1.5 13.5,4.5 8,7.8 2.5,4.5" fill="#3f8fd8"/><polygon points="8,7.8 13.5,4.5 13.5,11 8,14.5" fill="#3f8fd8"/><g fill="none" stroke="#444" stroke-width="0.9"><path d="M8 1.5 L13.5 4.5 V11 L8 14.5 L2.5 11 V4.5 Z"/><path d="M2.5 4.5 L8 7.8 L13.5 4.5 M8 7.8 V14.5"/></g></svg>
<svg style="left:1981.0px;top:595.3px;" width="16" height="16" viewBox="0 0 16 16"><polygon points="2.5,4.5 8,1.5 8,7.8 2.5,11" fill="#3f8fd8"/><g fill="none" stroke="#444" stroke-width="0.9"><path d="M8 1.5 L13.5 4.5 V11 L8 14.5 L2.5 11 V4.5 Z"/><path d="M2.5 4.5 L8 7.8 L13.5 4.5 M8 7.8 V14.5"/></g></svg>
<svg style="left:1981.0px;top:622.8px;" width="16" height="16" viewBox="0 0 16 16"><path d="M2 14 L6 10" stroke="#3f8fd8" stroke-width="1.6"/><path d="M6 10.6 L12.5 3.2 L14 4.6 L7.4 12 Z" fill="#333"/></svg>
<svg style="left:1981.0px;top:644.8px;" width="16" height="16" viewBox="0 0 16 16"><path d="M2.5 6 L13.5 2.5 V10 L2.5 13.5 Z" fill="none" stroke="#444" stroke-width="1"/><circle cx="8" cy="8" r="0.9" fill="#3f8fd8"/></svg>
<svg style="left:1981.0px;top:667.0px;" width="16" height="16" viewBox="0 0 16 16"><path d="M2.5 6 L13.5 2.5 V10 L2.5 13.5 Z" fill="none" stroke="#444" stroke-width="1"/><circle cx="6" cy="8.6" r="0.9" fill="#3f8fd8"/><circle cx="10" cy="7.4" r="0.9" fill="#3f8fd8"/></svg>
<svg style="left:1981.0px;top:689.4px;" width="16" height="16" viewBox="0 0 16 16"><path d="M2.5 6 L13.5 2.5 V10 L2.5 13.5 Z" fill="none" stroke="#444" stroke-width="1"/><circle cx="6" cy="7" r="0.8" fill="#3f8fd8"/><circle cx="10" cy="6.6" r="0.8" fill="#3f8fd8"/><circle cx="8" cy="10" r="0.8" fill="#3f8fd8"/></svg>
<svg style="left:1981.0px;top:716.0px;" width="16" height="16" viewBox="0 0 16 16"><path d="M12.5 2 L3 8 L12.5 14 C10.5 10.5 10.5 5.5 12.5 2 Z" fill="#3c3c3c"/></svg>
<svg style="left:1981.0px;top:737.9px;" width="16" height="16" viewBox="0 0 16 16"><path d="M2.5 6 L13.5 2.5 V10 L2.5 13.5 Z" fill="#3f8fd8" stroke="#444" stroke-width="1"/><path d="M4 9.6 L12 7 M8 5.5 V11.5" stroke="#dbe9f7" stroke-width="0.9"/></svg>
<svg style="left:1981.0px;top:760.2px;" width="16" height="16" viewBox="0 0 16 16"><g fill="none" stroke="#444" stroke-width="1"><rect x="2" y="2" width="12" height="12"/><path d="M6 2 V14 M10 2 V14 M2 6 H14 M2 10 H14"/></g></svg>
<svg style="left:1981.0px;top:787.0px;" width="16" height="16" viewBox="0 0 16 16"><circle cx="5" cy="8" r="0.7" fill="#555"/><circle cx="8" cy="8" r="0.7" fill="#555"/><circle cx="11" cy="8" r="0.7" fill="#555"/></svg>
<svg style="left:1985.7px;top:806px;" width="4" height="5" viewBox="0 0 4 5"><path d="M0.5 0.3 L3.3 2.4 L0.5 4.5 Z" fill="#333"/></svg>
<div style="left:1075px;top:987.5px;width:166px;height:26.7px;background:#f1f1f1;"></div>
<div style="left:1206px;top:991px;width:1px;height:19px;background:#dedede;"></div>
<svg style="left:1081px;top:993px;" width="16" height="16" viewBox="0 0 16 16"><circle cx="6.3" cy="6.3" r="5" fill="#dcecfa" stroke="#555" stroke-width="1"/><path d="M6.3 3.3 V9.3 M3.3 6.3 H9.3" stroke="#3f8fd8" stroke-width="1.4"/><path d="M10 10 L14.5 14.5" stroke="#444" stroke-width="1.5"/></svg>
<svg style="left:1103.5px;top:993px;" width="16" height="16" viewBox="0 0 16 16"><path d="M2.5 12.5 V2.5" stroke="#27a04a" stroke-width="1.1"/><path d="M1 4.5 L2.5 1.5 L4 4.5 Z" fill="#27a04a"/><path d="M2.5 12.5 H13" stroke="#e33" stroke-width="1.1"/><path d="M11.5 11 L14.5 12.5 L11.5 14 Z" fill="#e33"/><circle cx="2.5" cy="12.5" r="1.3" fill="#22a"/><path d="M7 2.5 C11 3 13 6 13 9" fill="none" stroke="#555" stroke-width="1"/><path d="M11.5 7.6 L13.1 10 L14.3 7.4" fill="none" stroke="#555" stroke-width="0.9"/></svg>
<svg style="left:1125.5px;top:992.8px;" width="16" height="16" viewBox="0 0 16 16"><path d="M7 2.4 A5.7 5.7 0 0 0 6.2 13.4 M9 13.6 A5.7 5.7 0 0 0 9.8 2.6" fill="none" stroke="#444" stroke-width="1.3"/><path d="M5.4 0.3 L9 2.3 L5.8 4.6 Z M10.6 15.7 L7 13.7 L10.2 11.4 Z" fill="#444"/><circle cx="8" cy="8" r="1.5" fill="#fff" stroke="#3f8fd8" stroke-width="0.9"/></svg>
<svg style="left:1148px;top:992.8px;" width="16" height="16" viewBox="0 0 16 16"><path d="M7 2.4 A5.7 5.7 0 0 0 6.2 13.4 M9 13.6 A5.7 5.7 0 0 0 9.8 2.6" fill="none" stroke="#444" stroke-width="1.3"/><path d="M5.4 0.3 L9 2.3 L5.8 4.6 Z M10.6 15.7 L7 13.7 L10.2 11.4 Z" fill="#444"/></svg>
<svg style="left:1170.5px;top:993px;" width="15.5" height="15.5" viewBox="0 0 15.5 15.5"><polygon points="1,5 4,1.5 14.5,1.5 11.5,5" fill="#2f7fc8"/><polygon points="11.5,5 14.5,1.5 14.5,11 11.5,14.5" fill="#1f5fa0"/><rect x="1" y="5" width="10.5" height="9.5" fill="#2e8fe0"/></svg>
<svg style="left:1194.5px;top:999px;" width="5" height="3.5" viewBox="0 0 5 3.5"><path d="M0 0.3 H4.6 L2.3 3.2 Z" fill="#333"/></svg>
<svg style="left:1214.5px;top:999.5px;" width="10" height="3" viewBox="0 0 10 3"><circle cx="1.5" cy="1.3" r="0.8" fill="#444"/><circle cx="4.6" cy="1.3" r="0.8" fill="#444"/><circle cx="7.7" cy="1.3" r="0.8" fill="#444"/></svg>
<svg style="left:1228.5px;top:999px;" width="5" height="3.5" viewBox="0 0 5 3.5"><path d="M0 0.3 H4.6 L2.3 3.2 Z" fill="#333"/></svg>
<div style="left:312.3px;top:141.4px;width:144.2px;height:18px;background:#f9f9f9;border:1px solid #dcdcdc;box-sizing:border-box;border-bottom:none;"></div>
<span class="t" style="left:319.2px;top:142.65px;font-size:9.5px;line-height:13.5px;color:#3c3c3c;letter-spacing:-0.191px;">WGP_LOM 2024 - July Start</span>
<svg style="left:445.5px;top:146.6px;" width="8" height="8" viewBox="0 0 8 8"><path d="M0.8 0.8 L6.8 6.8 M6.8 0.8 L0.8 6.8" stroke="#555" stroke-width="0.9"/></svg>
<div style="left:313px;top:1014px;width:1690px;height:21px;background:#f7f7f7;"></div>
<div style="left:313px;top:1034px;width:1690px;height:1.5px;background:#c9c9c9;"></div>
<div style="left:314.5px;top:1015px;width:57px;height:19.5px;background:#fbfbfb;border:1px solid #dedede;box-sizing:border-box;border-bottom:none;"></div>
<svg style="left:319.6px;top:1017.5px;" width="13.5" height="14" viewBox="0 0 13.5 14"><path d="M1 4 L7.5 1 L12.5 3.2 V10 L6 13 L1 10.8 Z M1 4 L6 6.2 L12.5 3.2 M6 6.2 V13" fill="none" stroke="#555" stroke-width="1"/></svg>
<span class="t" style="left:335.9px;top:1017.35px;font-size:9.5px;line-height:13.5px;color:#3c3c3c;letter-spacing:-0.877px;">MODEL</span>
<div style="left:372.6px;top:1015px;width:133.5px;height:19.5px;background:#f1f1f1;border:1px solid #dedede;box-sizing:border-box;border-bottom:none;"></div>
<svg style="left:377.5px;top:1018.2px;" width="11.5" height="13" viewBox="0 0 11.5 13"><rect x="0.8" y="0.8" width="9.8" height="11.2" rx="1" fill="#cfe2f5" stroke="#666" stroke-width="1"/><rect x="2.8" y="2.2" width="6.8" height="8.6" fill="#9cc3ea" stroke="#7ba6d3" stroke-width="0.6"/></svg>
<span class="t" style="left:392.8px;top:1017.35px;font-size:9.5px;line-height:13.5px;color:#3c3c3c;letter-spacing:-0.433px;">QUICK PLOT LANDSCAPE</span>
<svg style="left:513px;top:1018.5px;" width="13" height="13" viewBox="0 0 13 13"><path d="M6.4 1 V11.8 M1 6.4 H11.8" stroke="#444" stroke-width="1.2"/></svg>
<div style="left:313px;top:1037.5px;width:1690px;height:174.5px;background:#f8f8f8;border:1px solid #e4e4e4;box-sizing:border-box;"></div>
<span class="t" style="left:321.1px;top:1047.15px;font-size:11.5px;line-height:15.5px;color:#333;letter-spacing:0.230px;">Output</span>
<svg style="left:1955px;top:1049.5px;" width="9" height="10" viewBox="0 0 9 10"><path d="M2.2 0.8 H6.8 M3 0.8 V4.6 M6 0.8 V4.6 M1.2 4.8 H7.8 M4.5 4.8 V9" fill="none" stroke="#666" stroke-width="0.9"/></svg>
<svg style="left:1983px;top:1049.8px;" width="9" height="9" viewBox="0 0 9 9"><path d="M0.8 0.8 L8 8 M8 0.8 L0.8 8" stroke="#555" stroke-width="1"/></svg>
<div style="left:315px;top:1068px;width:1685px;height:22.5px;background:#efefef;"></div>
<svg style="left:318.8px;top:1072px;" width="15" height="15" viewBox="0 0 15 15"><rect x="0.8" y="1.5" width="9" height="11" fill="#555"/><rect x="3" y="0.5" width="4.6" height="2.4" fill="#777"/><path d="M5.5 5 H11 L13.6 7.6 V14.2 H5.5 Z" fill="#f4f8fc" stroke="#6d8db3" stroke-width="0.9"/></svg>
<svg style="left:344px;top:1075px;" width="10" height="10" viewBox="0 0 10 10"><path d="M1.4 1.4 L8.4 8.4 M8.4 1.4 L1.4 8.4" stroke="#e3202a" stroke-width="2.2"/></svg>
<svg style="left:365px;top:1073px;" width="13" height="13" viewBox="0 0 13 13"><path d="M1.5 6 V3.5 C1.5 0.6 6 0.6 6 3.5 V4.6" fill="none" stroke="#444" stroke-width="1.5"/><rect x="5" y="6" width="7.4" height="5.8" fill="#444"/></svg>
<div style="left:386.5px;top:1068px;width:57px;height:22.5px;background:#cfcfcf;"></div>
<span class="t" style="left:390.5px;top:1072.45px;font-size:10.5px;line-height:14.5px;color:#444;letter-spacing:0.010px;">Command</span>
<span class="t" style="left:451.5px;top:1072.45px;font-size:10.5px;line-height:14.5px;color:#555;letter-spacing:0.049px;">Rotation</span>
<span class="t" style="left:502.7px;top:1072.45px;font-size:10.5px;line-height:14.5px;color:#555;letter-spacing:0.064px;">Coordinate</span>
<span class="t" style="left:566.8px;top:1072.45px;font-size:10.5px;line-height:14.5px;color:#555;letter-spacing:-0.010px;">Relative rotation</span>
<span class="t" style="left:654.2px;top:1072.45px;font-size:10.5px;line-height:14.5px;color:#555;letter-spacing:-0.057px;">Relative coordinate</span>
<span class="t" style="left:755.1px;top:1072.45px;font-size:10.5px;line-height:14.5px;color:#444;letter-spacing:-0.060px;">Set working plane Z:</span>
<div style="left:446.8px;top:1070px;width:1px;height:19px;background:#e3e3e3;"></div>
<div style="left:497px;top:1070px;width:1px;height:19px;background:#e3e3e3;"></div>
<div style="left:560.5px;top:1070px;width:1px;height:19px;background:#e3e3e3;"></div>
<div style="left:648.3px;top:1070px;width:1px;height:19px;background:#e3e3e3;"></div>
<div style="left:749px;top:1070px;width:1px;height:19px;background:#e3e3e3;"></div>
<div style="left:857.3px;top:1071.4px;width:91.2px;height:16.6px;background:#fff;border:1px solid #d8d8d8;box-sizing:border-box;"></div>
<span class="t" style="left:919.3px;top:1072.75px;font-size:9.5px;line-height:13.5px;color:#444;letter-spacing:0.065px;">0.0</span>
<svg style="left:940px;top:1074.5px;" width="5" height="11" viewBox="0 0 5 11"><path d="M0.6 3.6 L2.5 1.2 L4.4 3.6 Z M0.6 7.4 L2.5 9.8 L4.4 7.4 Z" fill="#555"/></svg>
<span class="t" style="left:332.8px;top:1095.55px;font-size:9.5px;line-height:13.5px;color:#444;letter-spacing:-0.057px;">Command:</span>
<div style="left:380.4px;top:1096.2px;width:1619px;height:14px;background:#fff;border:1px solid #bdbdbd;box-sizing:border-box;"></div>
<div style="left:314.5px;top:1114px;width:1685.5px;height:97px;background:#fff;"></div>
<span class="t" style="left:316.8px;top:1115.90px;font-size:9.2px;line-height:13.2px;color:#444;letter-spacing:0.016px;">Selected layer set to 0\03 DESIGNS\04 PIT SOLIDS\JAN24</span>
<span class="t" style="left:316.8px;top:1127.66px;font-size:9.2px;line-height:13.2px;color:#444;letter-spacing:-0.016px;">Executed command ID=CID_EDIT_LEGENDS_REFRESH with Shortcut=(None)</span>
<span class="t" style="left:316.8px;top:1139.42px;font-size:9.2px;line-height:13.2px;color:#444;letter-spacing:-0.038px;">Executed command ID=CID_VIEW_SWITCH_BACKGROUNDCOLOR with Shortcut=(None)</span>
<span class="t" style="left:316.8px;top:1151.18px;font-size:9.2px;line-height:13.2px;color:#444;letter-spacing:0.002px;">Selected layer set to 0\01 SURVEY</span>
<span class="t" style="left:316.8px;top:1162.94px;font-size:9.2px;line-height:13.2px;color:#444;letter-spacing:0.018px;">Selected layer set to 0\03 DESIGNS</span>
<span class="t" style="left:316.8px;top:1174.70px;font-size:9.2px;line-height:13.2px;color:#444;letter-spacing:0.002px;">Selected layer set to 0\01 SURVEY</span>
<span class="t" style="left:316.8px;top:1186.46px;font-size:9.2px;line-height:13.2px;color:#444;letter-spacing:-0.157px;">Selected layer set to 04 SCHEDULER\DEPENDENCIES</span>
<span class="t" style="left:316.8px;top:1198.22px;font-size:9.2px;line-height:13.2px;color:#444;letter-spacing:-0.105px;">Selected layer set to 04 SCHEDULER\TASK SOLIDS</span>
<div style="left:1984.2px;top:1116px;width:14.5px;height:94px;background:#f0f0f0;"></div>
<div style="left:1984.2px;top:1116.3px;width:14.5px;height:15.2px;background:#fff;border:1px solid #cfcfcf;box-sizing:border-box;"></div>
<svg style="left:1988.7px;top:1121.8px;" width="6" height="4" viewBox="0 0 6 4"><path d="M0 4 L3 0.3 L6 4 Z" fill="#555"/></svg>
<div style="left:1984.2px;top:1173.9px;width:14.5px;height:20px;background:#fff;border:1px solid #cfcfcf;box-sizing:border-box;"></div>
<div style="left:1984.2px;top:1195.2px;width:14.5px;height:14px;background:#fff;border:1px solid #cfcfcf;box-sizing:border-box;"></div>
<svg style="left:1988.7px;top:1200.5px;" width="6" height="4" viewBox="0 0 6 4"><path d="M0 0 L3 3.7 L6 0 Z" fill="#555"/></svg>
<div style="left:1682px;top:1215px;width:1px;height:16px;background:#dadada;"></div>
<div style="left:1880.4px;top:1215px;width:1px;height:16px;background:#dadada;"></div>
<div style="left:2058.2px;top:1215px;width:1px;height:16px;background:#dadada;"></div>
<span class="t" style="left:1692px;top:1217.25px;font-size:9.5px;line-height:13.5px;color:#3c3c3c;letter-spacing:0.153px;">Working Azimuth: 0.0 Dip: 0.0</span>
<span class="t" style="left:1889.2px;top:1217.25px;font-size:9.5px;line-height:13.5px;color:#3c3c3c;letter-spacing:0.126px;">View Azimuth: 345.5 Dip: 47.4</span>
<span class="t" style="left:2067.9px;top:1217.25px;font-size:9.5px;line-height:13.5px;color:#3c3c3c;letter-spacing:-0.346px;">ORTHO</span>
<span class="t" style="left:2114.4px;top:1217.25px;font-size:9.5px;line-height:13.5px;color:#3c3c3c;letter-spacing:-0.521px;">POLAR</span>
<svg style="left:2159px;top:1217px;" width="15" height="13" viewBox="0 0 15 13"><rect x="0.6" y="0.6" width="13.6" height="11.6" fill="#f3f3f3" stroke="#666" stroke-width="1"/><rect x="0.6" y="0.6" width="13.6" height="2" fill="#555"/><path d="M4.5 6.3 H9 V4.6 L12.6 7.4 L9 10.2 V8.5 H4.5 Z" fill="#2e86d6"/></svg>
<span class="t" style="left:2175.9px;top:1217.25px;font-size:9.5px;line-height:13.5px;color:#3c3c3c;letter-spacing:-0.194px;">Restore Layout</span>
<svg style="left:2239.5px;top:1221.4px;" width="8" height="5.2" viewBox="0 0 8 5.2"><path d="M1 1 L4.0 4.2 L7 1" fill="none" stroke="#5a5a5a" stroke-width="1.1"/></svg>
<div style="left:2006.8px;top:143px;width:255.7px;height:1069px;background:#f8f8f8;border:1px solid #e6e6e6;box-sizing:border-box;"></div>
<span class="t" style="left:2014.6px;top:150.95px;font-size:11.5px;line-height:15.5px;color:#333;letter-spacing:0.019px;">Properties</span>
<svg style="left:2186px;top:152.5px;" width="11" height="11" viewBox="0 0 11 11"><circle cx="5.5" cy="5.5" r="4.8" fill="#f4f8fd" stroke="#b4c6dc" stroke-width="0.8"/><path d="M4.2 4.4 C4.2 2.8 6.9 2.8 6.9 4.4 C6.9 5.5 5.5 5.4 5.5 6.7" fill="none" stroke="#2d5f9a" stroke-width="1"/><circle cx="5.5" cy="8.2" r="0.6" fill="#2d5f9a"/></svg>
<svg style="left:2214.5px;top:153px;" width="9" height="10" viewBox="0 0 9 10"><path d="M2.2 0.8 H6.8 M3 0.8 V4.6 M6 0.8 V4.6 M1.2 4.8 H7.8 M4.5 4.8 V9" fill="none" stroke="#666" stroke-width="0.9"/></svg>
<svg style="left:2243px;top:153.3px;" width="9" height="9" viewBox="0 0 9 9"><path d="M0.8 0.8 L8 8 M8 0.8 L0.8 8" stroke="#555" stroke-width="1"/></svg>
<div style="left:2006.9px;top:171px;width:254.8px;height:1017.5px;background:#fefefe;border:1px solid #c8c8c8;box-sizing:border-box;"></div>
<div style="left:2007.9px;top:171.8px;width:126.6px;height:14.5px;background:#e4e4e4;"></div>
<div style="left:2007.9px;top:186.3px;width:252.8px;height:1px;background:#dcdcdc;"></div>
<span class="t" style="left:2028px;top:171.55px;font-size:9.5px;line-height:13.5px;color:#444;letter-spacing:-0.221px;">Selected Entities</span>
<span class="t" style="left:2254.2px;top:171.55px;font-size:9.5px;line-height:13.5px;color:#444;">0</span>
<div style="left:2008px;top:1188.5px;width:58.5px;height:22.5px;background:#fdfdfd;border:1px solid #e6e6e6;box-sizing:border-box;border-top:none;"></div>
<span class="t" style="left:2018px;top:1194.25px;font-size:9.5px;line-height:13.5px;color:#2f6eb3;letter-spacing:-0.179px;">Properties</span>
<span class="t" style="left:2075.6px;top:1194.25px;font-size:9.5px;line-height:13.5px;color:#444;letter-spacing:-0.403px;">Process Map</span>
<div style="left:2133.5px;top:1193px;width:1px;height:15px;background:#dedede;"></div>
</div></body></html>
